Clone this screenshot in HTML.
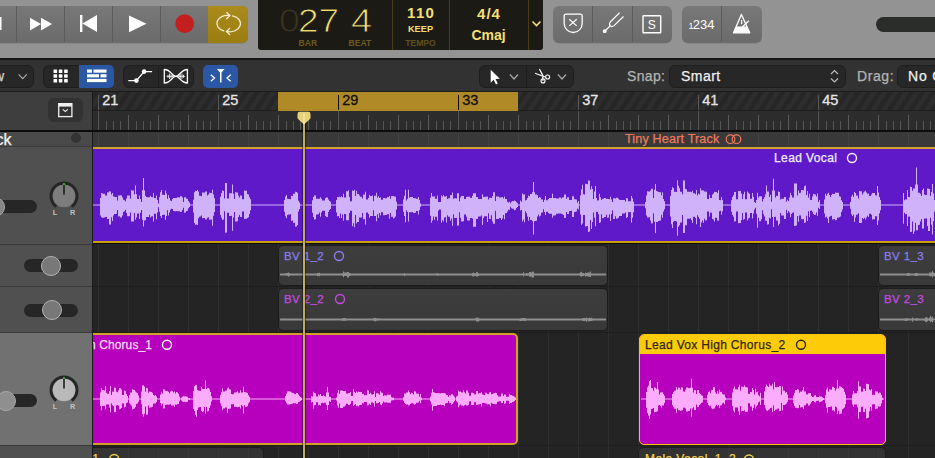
<!DOCTYPE html><html><head><meta charset="utf-8"><style>
*{box-sizing:border-box}
body{margin:0;width:935px;height:458px;overflow:hidden;position:relative;background:#242424;font-family:"Liberation Sans",sans-serif}
.a{position:absolute}
div.a{-webkit-text-stroke:0.25px currentColor;white-space:nowrap}
</style></head><body>

<div class="a" style="left:0;top:0;width:935px;height:58px;background:#939393"></div>
<div class="a" style="left:0;top:58px;width:935px;height:2px;background:#161616"></div>
<div class="a" style="left:-40px;top:6px;width:288px;height:36.5px;background:linear-gradient(#787878,#6b6b6b);border-radius:6px;box-shadow:0 0.5px 0.5px rgba(0,0,0,0.15)"></div>
<div class="a" style="left:16px;top:6px;width:1px;height:36px;background:#5c5c5c"></div>
<div class="a" style="left:64px;top:6px;width:1px;height:36px;background:#5c5c5c"></div>
<div class="a" style="left:112px;top:6px;width:1px;height:36px;background:#5c5c5c"></div>
<div class="a" style="left:160px;top:6px;width:1px;height:36px;background:#5c5c5c"></div>
<div class="a" style="left:208px;top:6px;width:40px;height:36.5px;background:linear-gradient(#a98a1b,#9b7d12);border-radius:0 6px 6px 0"></div>
<svg class="a" style="left:0;top:0" width="260" height="58">
<rect x="-3" y="17" width="4.5" height="13" fill="#fff"/>
<path d="M30 17.7 L41 24 L30 30.4Z M41 17.7 L52 24 L41 30.4Z" fill="#fff"/>
<rect x="80" y="15" width="2.4" height="17" fill="#fff"/>
<path d="M97 15 L82.4 23.5 L97 32Z" fill="#fff"/>
<path d="M129 15.4 L146.5 23.8 L129 32.3Z" fill="#fff"/>
<circle cx="184.7" cy="23.6" r="9.4" fill="#c41f1f"/>
<g fill="none" stroke="#f3ecd0" stroke-width="1.3" stroke-linecap="round">
<path d="M229.2 15.5 A10.5 8 0 0 0 223.8 30.9"/>
<path d="M232.6 15.9 A10.5 8 0 0 1 227 31.5"/>
<path d="M226.6 12.6 L229.9 15.6 L226.6 18.8"/>
<path d="M229.7 28.4 L226.4 31.5 L229.7 34.6"/>
</g>
</svg>
<div class="a" style="left:258px;top:-6px;width:284.6px;height:56px;background:#1c1a14;border-radius:3px"></div>
<div class="a" style="left:392px;top:0;width:1px;height:50px;background:#4a3d16"></div>
<div class="a" style="left:449px;top:0;width:1px;height:50px;background:#4a3d16"></div>
<div class="a" style="left:528px;top:0;width:1px;height:50px;background:#4a3d16"></div>
<div class="a" style="left:278.5px;top:2.5px;font-size:33px;color:#3a3422;line-height:36px;-webkit-text-stroke:0.9px #1c1a14;transform:scaleX(1.14);transform-origin:0 0">0</div>
<div class="a" style="left:298px;top:2.5px;font-size:33px;color:#f4df73;line-height:36px;-webkit-text-stroke:0.9px #1c1a14;transform:scaleX(1.12);transform-origin:0 0">27</div>
<div class="a" style="left:351px;top:2.5px;font-size:33px;color:#f4df73;line-height:36px;-webkit-text-stroke:0.9px #1c1a14;transform:scaleX(1.15);transform-origin:0 0">4</div>
<div class="a" style="left:298.5px;top:36.5px;font-size:8.6px;font-weight:bold;color:#6a5a1f;line-height:12px;-webkit-text-stroke:0">BAR</div>
<div class="a" style="left:348.5px;top:36.5px;font-size:8.6px;font-weight:bold;color:#6a5a1f;line-height:12px;-webkit-text-stroke:0">BEAT</div>
<div class="a" style="left:392px;top:4.5px;width:57px;text-align:center;font-size:15px;font-weight:bold;color:#f4df73;line-height:16px;letter-spacing:1.3px;text-indent:1.3px;-webkit-text-stroke:0">110</div>
<div class="a" style="left:392px;top:23px;width:57px;text-align:center;font-size:9.2px;font-weight:bold;color:#f4df73;line-height:12px;-webkit-text-stroke:0">KEEP</div>
<div class="a" style="left:392px;top:36.5px;width:57px;text-align:center;font-size:8.6px;font-weight:bold;color:#5f501b;line-height:12px;-webkit-text-stroke:0">TEMPO</div>
<div class="a" style="left:449px;top:5px;width:79px;text-align:center;font-size:15px;font-weight:bold;color:#f4df73;line-height:17px;letter-spacing:1px;text-indent:1px;-webkit-text-stroke:0">4/4</div>
<div class="a" style="left:449px;top:26.5px;width:79px;text-align:center;font-size:14px;font-weight:bold;color:#f4df73;line-height:17px;-webkit-text-stroke:0">Cmaj</div>
<svg class="a" style="left:528.5px;top:0" width="14" height="50"><path d="M3.5 21.5 L7.5 25.5 L11.5 21.5" fill="none" stroke="#f4df73" stroke-width="1.6"/></svg>
<div class="a" style="left:553px;top:6px;width:119px;height:36.5px;background:linear-gradient(#787878,#6b6b6b);border-radius:6px;box-shadow:0 0.5px 0.5px rgba(0,0,0,0.15)"></div>
<div class="a" style="left:592px;top:6px;width:1px;height:36px;background:#5c5c5c"></div>
<div class="a" style="left:632px;top:6px;width:1px;height:36px;background:#5c5c5c"></div>
<div class="a" style="left:682px;top:6px;width:80px;height:36.5px;background:linear-gradient(#787878,#6b6b6b);border-radius:6px;box-shadow:0 0.5px 0.5px rgba(0,0,0,0.15)"></div>
<div class="a" style="left:721px;top:6px;width:1px;height:36px;background:#5c5c5c"></div>
<svg class="a" style="left:540px;top:0" width="240" height="58">
<path d="M26.2 14.2 H40.2 Q42.2 14.2 42.2 16.2 V23.5 A9 9 0 0 1 24.2 23.5 V16.2 Q24.2 14.2 26.2 14.2Z" fill="none" stroke="#fff" stroke-width="1.3"/>
<path d="M29.3 19.3 L36.7 25.9 M36.7 19.3 L29.3 25.9" stroke="#fff" stroke-width="1.2"/>
<circle cx="64.7" cy="31.2" r="1.9" fill="#fff"/>
<path d="M64.7 31.2 L69.8 26.2" stroke="#fff" stroke-width="1.2"/>
<path d="M79.6 12.6 L70.3 22 Q68.7 24 70.2 25.8 Q72 27.4 74 25.6 L83.5 16.5" fill="none" stroke="#fff" stroke-width="1.2"/>
<rect x="103" y="15.7" width="17.7" height="17" rx="0.5" fill="none" stroke="#fff" stroke-width="1.4"/>
<text x="111.8" y="29" text-anchor="middle" font-family="Liberation Sans" font-size="12" fill="#fff">S</text>
<text x="148.5" y="28.5" font-family="Liberation Sans" font-size="9" fill="#fff">1</text>
<text x="152.8" y="28.5" font-family="Liberation Sans" font-size="13" fill="#fff">234</text>
<path d="M201.4 14.4 L193.5 32.8 H209.7 Z" fill="none" stroke="#fff" stroke-width="1.3" stroke-linejoin="round"/>
<path d="M196.25 26.4 H206.8 L209.7 32.8 H193.5Z" fill="#fff"/>
<path d="M201.6 27.7 L208.9 20.8 M201.6 20 V24.3" stroke="#fff" stroke-width="1.2"/>
</svg>
<div class="a" style="left:876px;top:17px;width:80px;height:15px;background:#2a2d2a;border-radius:8px"></div>
<div class="a" style="left:0;top:60px;width:935px;height:31px;background:#323232"></div>
<div class="a" style="left:-40px;top:65px;width:74px;height:22.5px;background:#272727;border:1px solid #1e1e1e;border-radius:6px"></div>
<div class="a" style="left:-6px;top:66px;font-size:14px;color:#d0d0d0;line-height:20px">w</div>
<svg class="a" style="left:0;top:59px" width="260" height="32"><path d="M18.6 15.3 L22.7 19.6 L26.8 15.3" fill="none" stroke="#a8a8a8" stroke-width="1.2"/></svg>
<div class="a" style="left:43px;top:64.5px;width:71px;height:23px;background:#272727;border:1px solid #1e1e1e;border-radius:6px"></div>
<div class="a" style="left:79px;top:64.5px;width:35px;height:23px;background:#2a58a4;border-radius:0 5px 5px 0"></div>
<div class="a" style="left:123px;top:64.5px;width:71px;height:23px;background:#272727;border:1px solid #1e1e1e;border-radius:6px"></div>
<div class="a" style="left:158px;top:65px;width:1px;height:22px;background:#1e1e1e"></div>
<div class="a" style="left:203px;top:64.5px;width:35px;height:23px;background:#2a58a4;border-radius:5px"></div>
<svg class="a" style="left:0;top:59px" width="260" height="32"><rect x="53.5" y="10.5" width="3.6" height="3.6" rx="0.6" fill="#fff"/><rect x="53.5" y="15.2" width="3.6" height="3.6" rx="0.6" fill="#fff"/><rect x="53.5" y="19.9" width="3.6" height="3.6" rx="0.6" fill="#fff"/><rect x="58.8" y="10.5" width="3.6" height="3.6" rx="0.6" fill="#fff"/><rect x="58.8" y="15.2" width="3.6" height="3.6" rx="0.6" fill="#fff"/><rect x="58.8" y="19.9" width="3.6" height="3.6" rx="0.6" fill="#fff"/><rect x="64.1" y="10.5" width="3.6" height="3.6" rx="0.6" fill="#fff"/><rect x="64.1" y="15.2" width="3.6" height="3.6" rx="0.6" fill="#fff"/><rect x="64.1" y="19.9" width="3.6" height="3.6" rx="0.6" fill="#fff"/>
<rect x="87" y="10.5" width="5" height="3.2" fill="#fff"/><rect x="93.5" y="10.5" width="13" height="3.2" fill="#fff"/>
<rect x="87" y="15.2" width="12" height="3.2" fill="#fff"/><rect x="100.5" y="15.2" width="6" height="3.2" fill="#fff"/>
<rect x="87" y="19.9" width="19.5" height="3.2" fill="#fff"/>
<path d="M128.3 21.6 H136.4 L144.1 12.6 H152.1" fill="none" stroke="#fff" stroke-width="1.3"/>
<circle cx="136.4" cy="21.6" r="2.3" fill="#fff"/><circle cx="144.1" cy="12.6" r="2.3" fill="#fff"/>
<path d="M164.3 10.5 C171 10.5 172 17.3 175.8 17.3 C179.6 17.3 181 24 187.4 24 M164.3 24 C171 24 172 17.3 175.8 17.3 C179.6 17.3 181 10.5 187.4 10.5 M164.3 10 V24.5 M187.4 10 V24.5" fill="none" stroke="#fff" stroke-width="1.3"/>
<path d="M166.5 17.3 H185 M168 15.8 V18.8 M169.5 14.5 V20 M171 15.3 V19.3 M172.3 16 V18.6 M179.3 16 V18.6 M180.6 15.3 V19.3 M182 14.5 V20 M183.5 15.8 V18.8" stroke="#fff" stroke-width="0.8"/>
<path d="M216.9 10 H224.6 L221.7 13.3 H219.8 Z" fill="#fff"/>
<path d="M220.75 12.5 V23.5" stroke="#fff" stroke-width="1.5"/>
<path d="M210.8 15.8 L214.5 19 L210.8 22.2 M230.7 15.8 L227 19 L230.7 22.2" fill="none" stroke="#fff" stroke-width="1.3"/>
</svg>
<div class="a" style="left:479px;top:64.5px;width:95px;height:23px;background:#272727;border:1px solid #1e1e1e;border-radius:6px"></div>
<div class="a" style="left:526px;top:65px;width:1px;height:22px;background:#1e1e1e"></div>
<svg class="a" style="left:470px;top:59px" width="110" height="32">
<path d="M20.7 10.8 V23.7 L23.6 20.8 L26 25.5 L27.8 24.6 L25.5 20 L29.8 19.8 Z" fill="#fff"/>
<path d="M40 15.5 L44 20 L48 15.5" fill="none" stroke="#aaa" stroke-width="1.2"/>
<path d="M65.1 14.3 L75.2 18 M69.4 10 L72.7 16.1 M72.7 16.1 L73 21.9" fill="none" stroke="#fff" stroke-width="1.2"/>
<circle cx="77.6" cy="18" r="2" fill="none" stroke="#fff" stroke-width="1.1"/><circle cx="73" cy="21.9" r="2" fill="none" stroke="#fff" stroke-width="1.1"/>
<path d="M88 15.5 L92 20 L96 15.5" fill="none" stroke="#aaa" stroke-width="1.2"/>
</svg>
<div class="a" style="left:627px;top:66px;font-size:14px;color:#b4b4b4;line-height:20px;letter-spacing:0.35px">Snap:</div>
<div class="a" style="left:669px;top:64.5px;width:177px;height:23px;background:#272727;border:1px solid #1e1e1e;border-radius:6px"></div>
<div class="a" style="left:681px;top:66px;font-size:14px;color:#f0f0f0;line-height:20px;letter-spacing:0.45px">Smart</div>
<svg class="a" style="left:820px;top:59px" width="26" height="32"><path d="M11 15 L14.5 11.5 L18 15 M11 19.5 L14.5 23 L18 19.5" fill="none" stroke="#bbb" stroke-width="1.2"/></svg>
<div class="a" style="left:857px;top:66px;font-size:14px;color:#b4b4b4;line-height:20px;letter-spacing:0.6px">Drag:</div>
<div class="a" style="left:897px;top:64.5px;width:80px;height:23px;background:#272727;border:1px solid #1e1e1e;border-radius:6px"></div>
<div class="a" style="left:908px;top:66px;font-size:14px;color:#f0f0f0;line-height:20px;letter-spacing:0.8px">No C</div>
<div class="a" style="left:0;top:91px;width:935px;height:1px;background:#1b1b1b"></div>
<div class="a" style="left:0;top:92px;width:92px;height:39px;background:#3e3e3e"></div>
<div class="a" style="left:47.5px;top:98px;width:35.5px;height:24px;background:#323232;border-radius:6px"></div>
<svg class="a" style="left:47px;top:98px" width="36" height="24"><rect x="11.7" y="5.7" width="13.2" height="12.9" fill="none" stroke="#f0f0f0" stroke-width="1.3"/><rect x="11.7" y="5.2" width="13.2" height="3.4" fill="#f0f0f0"/><path d="M15.8 11.3 L18.3 13.5 L20.8 11.3" fill="none" stroke="#e8e8e8" stroke-width="1.1"/></svg>
<div class="a" style="left:92px;top:92px;width:1px;height:366px;background:#1a1a1a"></div>
<div class="a" style="left:93px;top:92px;width:842px;height:18px;background:repeating-linear-gradient(-57deg,#262626 0 4.5px,#2d2d2d 4.5px 9px)"></div>
<div class="a" style="left:93px;top:110px;width:842px;height:1px;background:#1f1f1f"></div>
<div class="a" style="left:93px;top:111px;width:842px;height:19px;background:#2c2c2c"></div>
<div class="a" style="left:0;top:130px;width:935px;height:2px;background:#0c0c0c"></div>
<div class="a" style="left:278px;top:92px;width:240px;height:19px;background:#b08a27"></div>
<svg class="a" style="left:0;top:0" width="935" height="135"><rect x="98" y="95" width="1" height="15" fill="#5a5a5a"/><rect x="98" y="111" width="1" height="19" fill="#555"/><text x="102.3" y="105.3" font-family="Liberation Sans" font-size="14.5" fill="#e6e6e6" stroke="#e6e6e6" stroke-width="0.3">21</text><rect x="106" y="121" width="1" height="9" fill="#555"/><rect x="113" y="121" width="1" height="9" fill="#555"/><rect x="120" y="121" width="1" height="9" fill="#555"/><rect x="128" y="115" width="1" height="15" fill="#5a5a5a"/><rect x="136" y="121" width="1" height="9" fill="#555"/><rect x="143" y="121" width="1" height="9" fill="#555"/><rect x="150" y="121" width="1" height="9" fill="#555"/><rect x="158" y="115" width="1" height="15" fill="#5a5a5a"/><rect x="166" y="121" width="1" height="9" fill="#555"/><rect x="173" y="121" width="1" height="9" fill="#555"/><rect x="180" y="121" width="1" height="9" fill="#555"/><rect x="188" y="115" width="1" height="15" fill="#5a5a5a"/><rect x="196" y="121" width="1" height="9" fill="#555"/><rect x="203" y="121" width="1" height="9" fill="#555"/><rect x="210" y="121" width="1" height="9" fill="#555"/><rect x="218" y="95" width="1" height="15" fill="#5a5a5a"/><rect x="218" y="111" width="1" height="19" fill="#555"/><text x="222.3" y="105.3" font-family="Liberation Sans" font-size="14.5" fill="#e6e6e6" stroke="#e6e6e6" stroke-width="0.3">25</text><rect x="226" y="121" width="1" height="9" fill="#555"/><rect x="233" y="121" width="1" height="9" fill="#555"/><rect x="240" y="121" width="1" height="9" fill="#555"/><rect x="248" y="115" width="1" height="15" fill="#5a5a5a"/><rect x="256" y="121" width="1" height="9" fill="#555"/><rect x="263" y="121" width="1" height="9" fill="#555"/><rect x="270" y="121" width="1" height="9" fill="#555"/><rect x="278" y="115" width="1" height="15" fill="#5a5a5a"/><rect x="286" y="121" width="1" height="9" fill="#555"/><rect x="293" y="121" width="1" height="9" fill="#555"/><rect x="300" y="121" width="1" height="9" fill="#555"/><rect x="308" y="115" width="1" height="15" fill="#5a5a5a"/><rect x="316" y="121" width="1" height="9" fill="#555"/><rect x="323" y="121" width="1" height="9" fill="#555"/><rect x="330" y="121" width="1" height="9" fill="#555"/><rect x="338" y="95" width="1" height="15" fill="#111"/><rect x="338" y="111" width="1" height="19" fill="#555"/><text x="342.3" y="105.3" font-family="Liberation Sans" font-size="14.5" fill="#111" stroke="#111" stroke-width="0.3">29</text><rect x="346" y="121" width="1" height="9" fill="#555"/><rect x="353" y="121" width="1" height="9" fill="#555"/><rect x="360" y="121" width="1" height="9" fill="#555"/><rect x="368" y="115" width="1" height="15" fill="#5a5a5a"/><rect x="376" y="121" width="1" height="9" fill="#555"/><rect x="383" y="121" width="1" height="9" fill="#555"/><rect x="390" y="121" width="1" height="9" fill="#555"/><rect x="398" y="115" width="1" height="15" fill="#5a5a5a"/><rect x="406" y="121" width="1" height="9" fill="#555"/><rect x="413" y="121" width="1" height="9" fill="#555"/><rect x="420" y="121" width="1" height="9" fill="#555"/><rect x="428" y="115" width="1" height="15" fill="#5a5a5a"/><rect x="436" y="121" width="1" height="9" fill="#555"/><rect x="443" y="121" width="1" height="9" fill="#555"/><rect x="450" y="121" width="1" height="9" fill="#555"/><rect x="458" y="95" width="1" height="15" fill="#111"/><rect x="458" y="111" width="1" height="19" fill="#555"/><text x="462.3" y="105.3" font-family="Liberation Sans" font-size="14.5" fill="#111" stroke="#111" stroke-width="0.3">33</text><rect x="466" y="121" width="1" height="9" fill="#555"/><rect x="473" y="121" width="1" height="9" fill="#555"/><rect x="480" y="121" width="1" height="9" fill="#555"/><rect x="488" y="115" width="1" height="15" fill="#5a5a5a"/><rect x="496" y="121" width="1" height="9" fill="#555"/><rect x="503" y="121" width="1" height="9" fill="#555"/><rect x="510" y="121" width="1" height="9" fill="#555"/><rect x="518" y="115" width="1" height="15" fill="#5a5a5a"/><rect x="526" y="121" width="1" height="9" fill="#555"/><rect x="533" y="121" width="1" height="9" fill="#555"/><rect x="540" y="121" width="1" height="9" fill="#555"/><rect x="548" y="115" width="1" height="15" fill="#5a5a5a"/><rect x="556" y="121" width="1" height="9" fill="#555"/><rect x="563" y="121" width="1" height="9" fill="#555"/><rect x="570" y="121" width="1" height="9" fill="#555"/><rect x="578" y="95" width="1" height="15" fill="#5a5a5a"/><rect x="578" y="111" width="1" height="19" fill="#555"/><text x="582.3" y="105.3" font-family="Liberation Sans" font-size="14.5" fill="#e6e6e6" stroke="#e6e6e6" stroke-width="0.3">37</text><rect x="586" y="121" width="1" height="9" fill="#555"/><rect x="593" y="121" width="1" height="9" fill="#555"/><rect x="600" y="121" width="1" height="9" fill="#555"/><rect x="608" y="115" width="1" height="15" fill="#5a5a5a"/><rect x="616" y="121" width="1" height="9" fill="#555"/><rect x="623" y="121" width="1" height="9" fill="#555"/><rect x="630" y="121" width="1" height="9" fill="#555"/><rect x="638" y="115" width="1" height="15" fill="#5a5a5a"/><rect x="646" y="121" width="1" height="9" fill="#555"/><rect x="653" y="121" width="1" height="9" fill="#555"/><rect x="660" y="121" width="1" height="9" fill="#555"/><rect x="668" y="115" width="1" height="15" fill="#5a5a5a"/><rect x="676" y="121" width="1" height="9" fill="#555"/><rect x="683" y="121" width="1" height="9" fill="#555"/><rect x="690" y="121" width="1" height="9" fill="#555"/><rect x="698" y="95" width="1" height="15" fill="#5a5a5a"/><rect x="698" y="111" width="1" height="19" fill="#555"/><text x="702.3" y="105.3" font-family="Liberation Sans" font-size="14.5" fill="#e6e6e6" stroke="#e6e6e6" stroke-width="0.3">41</text><rect x="706" y="121" width="1" height="9" fill="#555"/><rect x="713" y="121" width="1" height="9" fill="#555"/><rect x="720" y="121" width="1" height="9" fill="#555"/><rect x="728" y="115" width="1" height="15" fill="#5a5a5a"/><rect x="736" y="121" width="1" height="9" fill="#555"/><rect x="743" y="121" width="1" height="9" fill="#555"/><rect x="750" y="121" width="1" height="9" fill="#555"/><rect x="758" y="115" width="1" height="15" fill="#5a5a5a"/><rect x="766" y="121" width="1" height="9" fill="#555"/><rect x="773" y="121" width="1" height="9" fill="#555"/><rect x="780" y="121" width="1" height="9" fill="#555"/><rect x="788" y="115" width="1" height="15" fill="#5a5a5a"/><rect x="796" y="121" width="1" height="9" fill="#555"/><rect x="803" y="121" width="1" height="9" fill="#555"/><rect x="810" y="121" width="1" height="9" fill="#555"/><rect x="818" y="95" width="1" height="15" fill="#5a5a5a"/><rect x="818" y="111" width="1" height="19" fill="#555"/><text x="822.3" y="105.3" font-family="Liberation Sans" font-size="14.5" fill="#e6e6e6" stroke="#e6e6e6" stroke-width="0.3">45</text><rect x="826" y="121" width="1" height="9" fill="#555"/><rect x="833" y="121" width="1" height="9" fill="#555"/><rect x="840" y="121" width="1" height="9" fill="#555"/><rect x="848" y="115" width="1" height="15" fill="#5a5a5a"/><rect x="856" y="121" width="1" height="9" fill="#555"/><rect x="863" y="121" width="1" height="9" fill="#555"/><rect x="870" y="121" width="1" height="9" fill="#555"/><rect x="878" y="115" width="1" height="15" fill="#5a5a5a"/><rect x="886" y="121" width="1" height="9" fill="#555"/><rect x="893" y="121" width="1" height="9" fill="#555"/><rect x="900" y="121" width="1" height="9" fill="#555"/><rect x="908" y="115" width="1" height="15" fill="#5a5a5a"/><rect x="916" y="121" width="1" height="9" fill="#555"/><rect x="923" y="121" width="1" height="9" fill="#555"/><rect x="930" y="121" width="1" height="9" fill="#555"/></svg>
<div class="a" style="left:0;top:132px;width:92px;height:14px;background:#4a4a4a"></div>
<div class="a" style="left:0;top:146px;width:92px;height:1px;background:#3a3a3a"></div>
<div class="a" style="left:-4.5px;top:131px;font-size:16px;color:#f4f4f4;line-height:18px">ck</div>
<div class="a" style="left:71px;top:133px;width:10px;height:10px;border-radius:50%;background:#333"></div>
<div class="a" style="left:93px;top:132px;width:842px;height:15px;background:#393939"></div>
<svg class="a" style="left:0;top:0" width="935" height="150"><rect x="98" y="132" width="1" height="15" fill="#424242"/><rect x="128" y="132" width="1" height="15" fill="#424242"/><rect x="158" y="132" width="1" height="15" fill="#424242"/><rect x="188" y="132" width="1" height="15" fill="#424242"/><rect x="218" y="132" width="1" height="15" fill="#424242"/><rect x="248" y="132" width="1" height="15" fill="#424242"/><rect x="278" y="132" width="1" height="15" fill="#424242"/><rect x="308" y="132" width="1" height="15" fill="#424242"/><rect x="338" y="132" width="1" height="15" fill="#424242"/><rect x="368" y="132" width="1" height="15" fill="#424242"/><rect x="398" y="132" width="1" height="15" fill="#424242"/><rect x="428" y="132" width="1" height="15" fill="#424242"/><rect x="458" y="132" width="1" height="15" fill="#424242"/><rect x="488" y="132" width="1" height="15" fill="#424242"/><rect x="518" y="132" width="1" height="15" fill="#424242"/><rect x="548" y="132" width="1" height="15" fill="#424242"/><rect x="578" y="132" width="1" height="15" fill="#424242"/><rect x="608" y="132" width="1" height="15" fill="#424242"/><rect x="638" y="132" width="1" height="15" fill="#424242"/><rect x="668" y="132" width="1" height="15" fill="#424242"/><rect x="698" y="132" width="1" height="15" fill="#424242"/><rect x="728" y="132" width="1" height="15" fill="#424242"/><rect x="758" y="132" width="1" height="15" fill="#424242"/><rect x="788" y="132" width="1" height="15" fill="#424242"/><rect x="818" y="132" width="1" height="15" fill="#424242"/><rect x="848" y="132" width="1" height="15" fill="#424242"/><rect x="878" y="132" width="1" height="15" fill="#424242"/><rect x="908" y="132" width="1" height="15" fill="#424242"/></svg>
<div class="a" style="left:625px;top:131px;font-size:12.5px;color:#ee7a5c;line-height:16px;letter-spacing:0.2px">Tiny Heart Track</div>
<svg class="a" style="left:720px;top:131px" width="30" height="16"><circle cx="10.5" cy="8.2" r="4.3" fill="none" stroke="#ee7a5c" stroke-width="1.2"/><circle cx="16.5" cy="8.2" r="4.3" fill="none" stroke="#ee7a5c" stroke-width="1.2"/></svg>
<div class="a" style="left:0;top:147px;width:92px;height:97px;background:#505050"></div>
<div class="a" style="left:0;top:244px;width:92px;height:1px;background:#3a3a3a"></div>
<div class="a" style="left:0;top:245px;width:92px;height:41px;background:#505050"></div>
<div class="a" style="left:0;top:286px;width:92px;height:1px;background:#3a3a3a"></div>
<div class="a" style="left:0;top:287px;width:92px;height:45px;background:#505050"></div>
<div class="a" style="left:0;top:332px;width:92px;height:1px;background:#3a3a3a"></div>
<div class="a" style="left:0;top:333px;width:92px;height:112px;background:#717171"></div>
<div class="a" style="left:0;top:445px;width:92px;height:1px;background:#3a3a3a"></div>
<div class="a" style="left:0;top:446px;width:92px;height:12px;background:#505050"></div>
<div class="a" style="left:-20px;top:200px;width:57px;height:13px;background:#262626;border-radius:6.5px"></div><div class="a" style="left:-15.0px;top:196.5px;width:20px;height:20px;border-radius:50%;background:#858585;border:1px solid #a9a9a9"></div>
<svg class="a" style="left:44px;top:176px" width="40" height="44">
<path d="M12.36 30.52 A13 13 0 1 1 27.64 30.52" fill="none" stroke="#262626" stroke-width="3"/>
<circle cx="20" cy="20" r="11.3" fill="#7d7d7d"/>
<path d="M20 8.5 V18.5" stroke="#262626" stroke-width="1.7"/>
<circle cx="20" cy="8" r="1.1" fill="#3fbf3f"/>
<text x="8.7" y="39.2" font-family="Liberation Sans" font-size="7.2" font-weight="bold" fill="#c4c4c4">L</text>
<text x="25.9" y="39.2" font-family="Liberation Sans" font-size="7.2" font-weight="bold" fill="#c4c4c4">R</text>
</svg>
<div class="a" style="left:24px;top:259px;width:54px;height:13px;background:#262626;border-radius:6.5px"></div>
<div class="a" style="left:41px;top:255.5px;width:20px;height:20px;border-radius:50%;background:#787878;border:1px solid #b3b3b3"></div>
<div class="a" style="left:24px;top:304px;width:54px;height:13px;background:#262626;border-radius:6.5px"></div>
<div class="a" style="left:42px;top:300px;width:20px;height:20px;border-radius:50%;background:#787878;border:1px solid #b3b3b3"></div>
<div class="a" style="left:-20px;top:394px;width:57px;height:13px;background:#262626;border-radius:6.5px"></div><div class="a" style="left:-4.0px;top:390.5px;width:20px;height:20px;border-radius:50%;background:#8f8f8f;border:1px solid #a9a9a9"></div>
<svg class="a" style="left:44px;top:370px" width="40" height="44">
<path d="M12.36 30.52 A13 13 0 1 1 27.64 30.52" fill="none" stroke="#262626" stroke-width="3"/>
<circle cx="20" cy="20" r="11.3" fill="#b9b9b9"/>
<path d="M20 8.5 V18.5" stroke="#262626" stroke-width="1.7"/>
<circle cx="20" cy="8" r="1.1" fill="#3fbf3f"/>
<text x="8.7" y="39.2" font-family="Liberation Sans" font-size="7.2" font-weight="bold" fill="#c4c4c4">L</text>
<text x="25.9" y="39.2" font-family="Liberation Sans" font-size="7.2" font-weight="bold" fill="#c4c4c4">R</text>
</svg>
<svg class="a" style="left:0;top:0" width="935" height="458"><rect x="98" y="244" width="1" height="214" fill="#303030"/><rect x="128" y="244" width="1" height="214" fill="#303030"/><rect x="158" y="244" width="1" height="214" fill="#303030"/><rect x="188" y="244" width="1" height="214" fill="#303030"/><rect x="218" y="244" width="1" height="214" fill="#303030"/><rect x="248" y="244" width="1" height="214" fill="#303030"/><rect x="278" y="244" width="1" height="214" fill="#303030"/><rect x="308" y="244" width="1" height="214" fill="#303030"/><rect x="338" y="244" width="1" height="214" fill="#303030"/><rect x="368" y="244" width="1" height="214" fill="#303030"/><rect x="398" y="244" width="1" height="214" fill="#303030"/><rect x="428" y="244" width="1" height="214" fill="#303030"/><rect x="458" y="244" width="1" height="214" fill="#303030"/><rect x="488" y="244" width="1" height="214" fill="#303030"/><rect x="518" y="244" width="1" height="214" fill="#303030"/><rect x="548" y="244" width="1" height="214" fill="#303030"/><rect x="578" y="244" width="1" height="214" fill="#303030"/><rect x="608" y="244" width="1" height="214" fill="#303030"/><rect x="638" y="244" width="1" height="214" fill="#303030"/><rect x="668" y="244" width="1" height="214" fill="#303030"/><rect x="698" y="244" width="1" height="214" fill="#303030"/><rect x="728" y="244" width="1" height="214" fill="#303030"/><rect x="758" y="244" width="1" height="214" fill="#303030"/><rect x="788" y="244" width="1" height="214" fill="#303030"/><rect x="818" y="244" width="1" height="214" fill="#303030"/><rect x="848" y="244" width="1" height="214" fill="#303030"/><rect x="878" y="244" width="1" height="214" fill="#303030"/><rect x="908" y="244" width="1" height="214" fill="#303030"/></svg>
<div class="a" style="left:93px;top:243px;width:842px;height:1px;background:#0c0c0c"></div>
<div class="a" style="left:93px;top:286px;width:842px;height:1px;background:#1e1e1e"></div>
<div class="a" style="left:93px;top:332px;width:842px;height:1px;background:#1e1e1e"></div>
<div class="a" style="left:93px;top:445px;width:842px;height:1px;background:#1e1e1e"></div>
<div class="a" style="left:93px;top:147px;width:842px;height:96px;background:#6019c9;border-top:2px solid #d3a126;border-bottom:2px solid #c9a00e"></div>
<div class="a" style="left:774px;top:150px;font-size:12px;color:#f4f0ff;line-height:16px;letter-spacing:0.4px">Lead Vocal</div>
<svg class="a" style="left:840px;top:148px" width="24" height="20"><circle cx="12" cy="10" r="4.5" fill="none" stroke="#f4f0ff" stroke-width="1.4"/></svg>
<svg class="a" style="left:0;top:0" width="935" height="458"><path d="M93 204.4 94 204.4 94 204.4 95 204.4 95 204.4 96 204.4 96 204.4 97 204.4 97 204.4 98 204.4 98 204.4 99 204.4 99 204.4 100 204.4 100 198.0 101 198.0 101 193.1 102 193.1 102 193.6 103 193.6 103 193.7 104 193.7 104 193.8 105 193.8 105 195.5 106 195.5 106 195.6 107 195.6 107 192.3 108 192.3 108 192.4 109 192.4 109 191.3 110 191.3 110 191.4 111 191.4 111 194.6 112 194.6 112 193.0 113 193.0 113 196.5 114 196.5 114 196.8 115 196.8 115 196.9 116 196.9 116 197.0 117 197.0 117 200.6 118 200.6 118 195.4 119 195.4 119 195.5 120 195.5 120 195.3 121 195.3 121 195.4 122 195.4 122 197.5 123 197.5 123 199.8 124 199.8 124 200.2 125 200.2 125 201.2 126 201.2 126 198.6 127 198.6 127 195.5 128 195.5 128 195.6 129 195.6 129 195.6 130 195.6 130 198.7 131 198.7 131 190.3 132 190.3 132 190.4 133 190.4 133 190.5 134 190.5 134 194.2 135 194.2 135 185.4 136 185.4 136 194.2 137 194.2 137 198.9 138 198.9 138 198.9 139 198.9 139 195.4 140 195.4 140 199.0 141 199.0 141 201.9 142 201.9 142 190.2 143 190.2 143 178.1 144 178.1 144 190.2 145 190.2 145 195.8 146 195.8 146 197.1 147 197.1 147 197.2 148 197.2 148 197.2 149 197.2 149 197.3 150 197.3 150 195.7 151 195.7 151 197.1 152 197.1 152 197.2 153 197.2 153 192.9 154 192.9 154 198.1 155 198.1 155 198.2 156 198.2 156 195.5 157 195.5 157 199.9 158 199.9 158 203.6 159 203.6 159 197.2 160 197.2 160 192.2 161 192.2 161 189.9 162 189.9 162 194.7 163 194.7 163 194.8 164 194.8 164 195.0 165 195.0 165 190.4 166 190.4 166 193.5 167 193.5 167 198.8 168 198.8 168 195.2 169 195.2 169 197.9 170 197.9 170 200.5 171 200.5 171 201.0 172 201.0 172 198.9 173 198.9 173 198.0 174 198.0 174 197.9 175 197.9 175 198.0 176 198.0 176 198.1 177 198.1 177 197.3 178 197.3 178 197.3 179 197.3 179 197.4 180 197.4 180 196.2 181 196.2 181 196.3 182 196.3 182 197.6 183 197.6 183 202.1 184 202.1 184 197.2 185 197.2 185 197.3 186 197.3 186 198.5 187 198.5 187 198.9 188 198.9 188 201.1 189 201.1 189 202.5 190 202.5 190 204.4 191 204.4 191 204.4 192 204.4 192 204.4 193 204.4 193 199.8 194 199.8 194 192.3 195 192.3 195 190.8 196 190.8 196 190.9 197 190.9 197 189.9 198 189.9 198 191.4 199 191.4 199 195.7 200 195.7 200 195.8 201 195.8 201 196.3 202 196.3 202 192.5 203 192.5 203 192.6 204 192.6 204 192.7 205 192.7 205 191.5 206 191.5 206 191.6 207 191.6 207 195.6 208 195.6 208 194.4 209 194.4 209 192.8 210 192.8 210 192.9 211 192.9 211 193.1 212 193.1 212 189.7 213 189.7 213 194.5 214 194.5 214 198.3 215 198.3 215 204.4 216 204.4 216 204.4 217 204.4 217 204.4 218 204.4 218 204.4 219 204.4 219 204.4 220 204.4 220 196.7 221 196.7 221 192.9 222 192.9 222 190.5 223 190.5 223 191.1 224 191.1 224 198.5 225 198.5 225 183.0 226 183.0 226 183.1 227 183.1 227 198.4 228 198.4 228 198.4 229 198.4 229 193.2 230 193.2 230 193.2 231 193.2 231 193.3 232 193.3 232 184.5 233 184.5 233 193.8 234 193.8 234 199.1 235 199.1 235 192.3 236 192.3 236 192.4 237 192.4 237 192.5 238 192.5 238 195.4 239 195.4 239 197.5 240 197.5 240 195.5 241 195.5 241 195.5 242 195.5 242 199.2 243 199.2 243 199.3 244 199.3 244 190.6 245 190.6 245 190.7 246 190.7 246 190.8 247 190.8 247 193.9 248 193.9 248 194.5 249 194.5 249 197.3 250 197.3 250 199.2 251 199.2 251 204.4 252 204.4 252 204.4 253 204.4 253 204.4 254 204.4 254 204.4 255 204.4 255 204.4 256 204.4 256 204.4 257 204.4 257 204.4 258 204.4 258 204.4 259 204.4 259 204.4 260 204.4 260 204.4 261 204.4 261 204.4 262 204.4 262 204.4 263 204.4 263 204.4 264 204.4 264 204.4 265 204.4 265 204.4 266 204.4 266 204.4 267 204.4 267 204.4 268 204.4 268 204.4 269 204.4 269 204.4 270 204.4 270 204.4 271 204.4 271 204.4 272 204.4 272 204.4 273 204.4 273 204.4 274 204.4 274 204.4 275 204.4 275 204.4 276 204.4 276 204.4 277 204.4 277 204.4 278 204.4 278 204.4 279 204.4 279 204.4 280 204.4 280 204.4 281 204.4 281 204.4 282 204.4 282 204.4 283 204.4 283 204.4 284 204.4 284 199.9 285 199.9 285 196.5 286 196.5 286 194.9 287 194.9 287 198.8 288 198.8 288 199.1 289 199.1 289 199.1 290 199.1 290 199.2 291 199.2 291 195.8 292 195.8 292 196.0 293 196.0 293 193.7 294 193.7 294 193.8 295 193.8 295 191.8 296 191.8 296 192.0 297 192.0 297 192.8 298 192.8 298 200.7 299 200.7 299 202.6 300 202.6 300 204.4 301 204.4 301 204.4 302 204.4 302 204.4 303 204.4 303 204.4 304 204.4 304 204.4 305 204.4 305 204.4 306 204.4 306 204.4 307 204.4 307 204.4 308 204.4 308 204.4 309 204.4 309 204.4 310 204.4 310 204.4 311 204.4 311 204.4 312 204.4 312 200.3 313 200.3 313 197.0 314 197.0 314 195.5 315 195.5 315 195.6 316 195.6 316 198.7 317 198.7 317 198.8 318 198.8 318 198.8 319 198.8 319 198.8 320 198.8 320 197.3 321 197.3 321 198.8 322 198.8 322 200.5 323 200.5 323 200.6 324 200.6 324 200.6 325 200.6 325 197.9 326 197.9 326 197.5 327 197.5 327 197.6 328 197.6 328 199.6 329 199.6 329 201.1 330 201.1 330 201.7 331 201.7 331 204.4 332 204.4 332 204.4 333 204.4 333 204.4 334 204.4 334 204.4 335 204.4 335 204.4 336 204.4 336 200.1 337 200.1 337 196.9 338 196.9 338 197.3 339 197.3 339 196.4 340 196.4 340 197.2 341 197.2 341 196.2 342 196.2 342 197.2 343 197.2 343 193.8 344 193.8 344 197.4 345 197.4 345 197.4 346 197.4 346 191.3 347 191.3 347 191.3 348 191.3 348 190.3 349 190.3 349 196.9 350 196.9 350 201.2 351 201.2 351 201.2 352 201.2 352 190.5 353 190.5 353 191.0 354 191.0 354 189.8 355 189.8 355 196.1 356 196.1 356 190.7 357 190.7 357 194.1 358 194.1 358 194.1 359 194.1 359 195.4 360 195.4 360 196.7 361 196.7 361 196.7 362 196.7 362 198.5 363 198.5 363 194.4 364 194.4 364 194.4 365 194.4 365 191.7 366 191.7 366 199.5 367 199.5 367 199.6 368 199.6 368 198.1 369 198.1 369 194.7 370 194.7 370 195.9 371 195.9 371 196.0 372 196.0 372 195.5 373 195.5 373 201.2 374 201.2 374 195.8 375 195.8 375 195.8 376 195.8 376 192.7 377 192.7 377 197.6 378 197.6 378 196.3 379 196.3 379 198.0 380 198.0 380 197.3 381 197.3 381 199.7 382 199.7 382 199.7 383 199.7 383 198.0 384 198.0 384 198.0 385 198.0 385 198.2 386 198.2 386 198.2 387 198.2 387 197.1 388 197.1 388 197.1 389 197.1 389 196.0 390 196.0 390 198.7 391 198.7 391 196.1 392 196.1 392 196.1 393 196.1 393 196.1 394 196.1 394 196.6 395 196.6 395 196.8 396 196.8 396 201.7 397 201.7 397 204.4 398 204.4 398 204.4 399 204.4 399 204.4 400 204.4 400 204.4 401 204.4 401 204.4 402 204.4 402 204.4 403 204.4 403 199.4 404 199.4 404 195.8 405 195.8 405 189.8 406 189.8 406 200.5 407 200.5 407 198.7 408 198.7 408 189.8 409 189.8 409 197.8 410 197.8 410 196.9 411 196.9 411 196.9 412 196.9 412 197.0 413 197.0 413 198.1 414 198.1 414 198.2 415 198.2 415 198.3 416 198.3 416 198.7 417 198.7 417 198.7 418 198.7 418 196.9 419 196.9 419 200.1 420 200.1 420 203.4 421 203.4 421 204.4 422 204.4 422 204.4 423 204.4 423 204.4 424 204.4 424 204.4 425 204.4 425 204.4 426 204.4 426 204.4 427 204.4 427 204.4 428 204.4 428 204.4 429 204.4 429 204.4 430 204.4 430 197.7 431 197.7 431 192.9 432 192.9 432 196.6 433 196.6 433 196.6 434 196.6 434 196.2 435 196.2 435 198.7 436 198.7 436 198.7 437 198.7 437 195.4 438 195.4 438 201.9 439 201.9 439 201.9 440 201.9 440 201.9 441 201.9 441 195.6 442 195.6 442 196.5 443 196.5 443 195.1 444 195.1 444 196.5 445 196.5 445 196.4 446 196.4 446 196.1 447 196.1 447 198.9 448 198.9 448 198.3 449 198.3 449 198.3 450 198.3 450 195.3 451 195.3 451 195.1 452 195.1 452 192.4 453 192.4 453 198.7 454 198.7 454 198.3 455 198.3 455 198.3 456 198.3 456 198.4 457 198.4 457 193.2 458 193.2 458 193.3 459 193.3 459 201.2 460 201.2 460 197.4 461 197.4 461 196.0 462 196.0 462 196.0 463 196.0 463 196.1 464 196.1 464 199.0 465 199.0 465 199.0 466 199.0 466 197.0 467 197.0 467 196.8 468 196.8 468 196.8 469 196.8 469 196.8 470 196.8 470 197.8 471 197.8 471 197.9 472 197.9 472 195.8 473 195.8 473 193.2 474 193.2 474 193.2 475 193.2 475 193.2 476 193.2 476 196.9 477 196.9 477 196.9 478 196.9 478 199.0 479 199.0 479 199.0 480 199.0 480 199.0 481 199.0 481 199.0 482 199.0 482 194.3 483 194.3 483 197.0 484 197.0 484 196.8 485 196.8 485 196.8 486 196.8 486 196.8 487 196.8 487 196.5 488 196.5 488 199.5 489 199.5 489 197.8 490 197.8 490 197.8 491 197.8 491 198.0 492 198.0 492 196.2 493 196.2 493 192.2 494 192.2 494 192.2 495 192.2 495 201.1 496 201.1 496 196.5 497 196.5 497 196.6 498 196.6 498 196.6 499 196.6 499 197.4 500 197.4 500 197.5 501 197.5 501 197.3 502 197.3 502 197.0 503 197.0 503 198.6 504 198.6 504 196.6 505 196.6 505 199.1 506 199.1 506 199.1 507 199.1 507 201.7 508 201.7 508 202.6 509 202.6 509 201.8 510 201.8 510 203.3 511 203.3 511 201.7 512 201.7 512 201.1 513 201.1 513 201.2 514 201.2 514 200.6 515 200.6 515 201.0 516 201.0 516 202.2 517 202.2 517 203.2 518 203.2 518 204.4 519 204.4 519 204.4 520 204.4 520 200.4 521 200.4 521 201.7 522 201.7 522 193.4 523 193.4 523 194.5 524 194.5 524 194.2 525 194.2 525 200.5 526 200.5 526 199.8 527 199.8 527 198.0 528 198.0 528 195.6 529 195.6 529 196.2 530 196.2 530 194.0 531 194.0 531 194.1 532 194.1 532 192.3 533 192.3 533 181.9 534 181.9 534 192.3 535 192.3 535 194.4 536 194.4 536 194.5 537 194.5 537 195.2 538 195.2 538 197.9 539 197.9 539 197.0 540 197.0 540 197.4 541 197.4 541 199.5 542 199.5 542 199.4 543 199.4 543 201.9 544 201.9 544 199.8 545 199.8 545 196.0 546 196.0 546 200.2 547 200.2 547 200.2 548 200.2 548 199.0 549 199.0 549 198.0 550 198.0 550 198.1 551 198.1 551 198.1 552 198.1 552 193.8 553 193.8 553 197.9 554 197.9 554 197.9 555 197.9 555 197.9 556 197.9 556 198.4 557 198.4 557 198.5 558 198.5 558 198.5 559 198.5 559 197.5 560 197.5 560 197.5 561 197.5 561 198.4 562 198.4 562 197.6 563 197.6 563 197.2 564 197.2 564 194.5 565 194.5 565 194.6 566 194.6 566 198.8 567 198.8 567 197.3 568 197.3 568 197.3 569 197.3 569 199.9 570 199.9 570 199.9 571 199.9 571 200.0 572 200.0 572 196.2 573 196.2 573 196.3 574 196.3 574 199.2 575 199.2 575 199.2 576 199.2 576 199.6 577 199.6 577 202.8 578 202.8 578 201.0 579 201.0 579 204.4 580 204.4 580 195.5 581 195.5 581 189.5 582 189.5 582 184.7 583 184.7 583 194.3 584 194.3 584 194.4 585 194.4 585 183.7 586 183.7 586 184.0 587 184.0 587 184.2 588 184.2 588 180.4 589 180.4 589 180.7 590 180.7 590 189.4 591 189.4 591 186.3 592 186.3 592 189.0 593 189.0 593 198.9 594 198.9 594 191.5 595 191.5 595 186.0 596 186.0 596 198.1 597 198.1 597 200.6 598 200.6 598 200.2 599 200.2 599 193.7 600 193.7 600 197.2 601 197.2 601 200.0 602 200.0 602 198.7 603 198.7 603 198.7 604 198.7 604 198.0 605 198.0 605 198.0 606 198.0 606 199.1 607 199.1 607 198.8 608 198.8 608 198.9 609 198.9 609 199.2 610 199.2 610 196.8 611 196.8 611 199.4 612 199.4 612 202.1 613 202.1 613 198.3 614 198.3 614 198.3 615 198.3 615 198.5 616 198.5 616 197.7 617 197.7 617 197.7 618 197.7 618 198.7 619 198.7 619 199.8 620 199.8 620 199.9 621 199.9 621 199.9 622 199.9 622 200.1 623 200.1 623 200.1 624 200.1 624 200.1 625 200.1 625 201.4 626 201.4 626 197.9 627 197.9 627 198.6 628 198.6 628 201.2 629 201.2 629 201.2 630 201.2 630 201.2 631 201.2 631 195.9 632 195.9 632 198.3 633 198.3 633 201.7 634 201.7 634 204.4 635 204.4 635 204.4 636 204.4 636 204.4 637 204.4 637 204.4 638 204.4 638 204.4 639 204.4 639 204.4 640 204.4 640 204.4 641 204.4 641 204.4 642 204.4 642 204.4 643 204.4 643 204.4 644 204.4 644 204.4 645 204.4 645 202.1 646 202.1 646 195.4 647 195.4 647 191.3 648 191.3 648 191.4 649 191.4 649 191.5 650 191.5 650 190.5 651 190.5 651 188.7 652 188.7 652 188.8 653 188.8 653 198.1 654 198.1 654 189.8 655 189.8 655 183.9 656 183.9 656 191.1 657 191.1 657 191.3 658 191.3 658 191.9 659 191.9 659 192.1 660 192.1 660 192.2 661 192.2 661 195.3 662 195.3 662 192.2 663 192.2 663 199.0 664 199.0 664 201.2 665 201.2 665 204.4 666 204.4 666 204.4 667 204.4 667 204.4 668 204.4 668 204.4 669 204.4 669 204.4 670 204.4 670 196.0 671 196.0 671 190.1 672 190.1 672 187.2 673 187.2 673 188.2 674 188.2 674 191.7 675 191.7 675 191.7 676 191.7 676 191.9 677 191.9 677 180.3 678 180.3 678 185.7 679 185.7 679 188.2 680 188.2 680 191.7 681 191.7 681 191.7 682 191.7 682 194.3 683 194.3 683 180.4 684 180.4 684 180.5 685 180.5 685 189.1 686 189.1 686 189.2 687 189.2 687 191.7 688 191.7 688 191.7 689 191.7 689 191.8 690 191.8 690 191.8 691 191.8 691 192.2 692 192.2 692 190.7 693 190.7 693 193.3 694 193.3 694 193.3 695 193.3 695 194.2 696 194.2 696 190.0 697 190.0 697 195.6 698 195.6 698 193.6 699 193.6 699 194.3 700 194.3 700 188.2 701 188.2 701 190.6 702 190.6 702 190.3 703 190.3 703 190.6 704 190.6 704 191.4 705 191.4 705 191.6 706 191.6 706 191.7 707 191.7 707 198.9 708 198.9 708 198.9 709 198.9 709 194.8 710 194.8 710 197.9 711 197.9 711 197.9 712 197.9 712 194.6 713 194.6 713 193.4 714 193.4 714 191.8 715 191.8 715 191.9 716 191.9 716 191.9 717 191.9 717 193.1 718 193.1 718 190.2 719 190.2 719 200.1 720 200.1 720 200.3 721 200.3 721 197.0 722 197.0 722 199.9 723 199.9 723 204.4 724 204.4 724 204.4 725 204.4 725 204.4 726 204.4 726 204.4 727 204.4 727 204.4 728 204.4 728 204.4 729 204.4 729 204.4 730 204.4 730 204.4 731 204.4 731 200.3 732 200.3 732 196.9 733 196.9 733 195.3 734 195.3 734 191.9 735 191.9 735 192.0 736 192.0 736 199.2 737 199.2 737 199.2 738 199.2 738 190.9 739 190.9 739 191.0 740 191.0 740 191.1 741 191.1 741 193.4 742 193.4 742 198.9 743 198.9 743 194.2 744 194.2 744 191.8 745 191.8 745 199.2 746 199.2 746 199.2 747 199.2 747 191.6 748 191.6 748 192.8 749 192.8 749 193.8 750 193.8 750 198.7 751 198.7 751 198.7 752 198.7 752 193.1 753 193.1 753 197.1 754 197.1 754 202.0 755 202.0 755 203.1 756 203.1 756 200.0 757 200.0 757 192.8 758 192.8 758 197.6 759 197.6 759 196.2 760 196.2 760 196.3 761 196.3 761 196.2 762 196.2 762 201.5 763 201.5 763 199.1 764 199.1 764 197.2 765 197.2 765 194.3 766 194.3 766 185.5 767 185.5 767 191.4 768 191.4 768 191.5 769 191.5 769 197.1 770 197.1 770 194.7 771 194.7 771 201.8 772 201.8 772 190.6 773 190.6 773 178.8 774 178.8 774 190.6 775 190.6 775 197.6 776 197.6 776 195.8 777 195.8 777 195.9 778 195.9 778 191.4 779 191.4 779 192.1 780 192.1 780 199.6 781 199.6 781 198.8 782 198.8 782 198.8 783 198.8 783 198.8 784 198.8 784 197.0 785 197.0 785 197.1 786 197.1 786 201.8 787 201.8 787 199.8 788 199.8 788 200.9 789 200.9 789 197.6 790 197.6 790 192.7 791 192.7 791 195.3 792 195.3 792 197.4 793 197.4 793 197.5 794 197.5 794 183.4 795 183.4 795 183.5 796 183.5 796 183.6 797 183.6 797 195.4 798 195.4 798 190.5 799 190.5 799 193.0 800 193.0 800 192.8 801 192.8 801 190.0 802 190.0 802 190.1 803 190.1 803 190.2 804 190.2 804 186.2 805 186.2 805 185.4 806 185.4 806 195.0 807 195.0 807 191.0 808 191.0 808 197.8 809 197.8 809 193.8 810 193.8 810 200.0 811 200.0 811 200.1 812 200.1 812 196.4 813 196.4 813 193.9 814 193.9 814 194.3 815 194.3 815 194.4 816 194.4 816 196.5 817 196.5 817 193.5 818 193.5 818 201.9 819 201.9 819 200.1 820 200.1 820 204.4 821 204.4 821 204.4 822 204.4 822 204.4 823 204.4 823 204.4 824 204.4 824 199.5 825 199.5 825 193.8 826 193.8 826 195.7 827 195.7 827 193.7 828 193.7 828 192.7 829 192.7 829 194.9 830 194.9 830 197.0 831 197.0 831 195.1 832 195.1 832 193.8 833 193.8 833 193.9 834 193.9 834 194.0 835 194.0 835 192.6 836 192.6 836 192.8 837 192.8 837 192.7 838 192.7 838 192.8 839 192.8 839 196.3 840 196.3 840 196.8 841 196.8 841 200.3 842 200.3 842 202.0 843 202.0 843 204.4 844 204.4 844 204.4 845 204.4 845 204.4 846 204.4 846 204.4 847 204.4 847 204.4 848 204.4 848 204.4 849 204.4 849 204.4 850 204.4 850 202.1 851 202.1 851 196.5 852 196.5 852 194.8 853 194.8 853 196.9 854 196.9 854 192.0 855 192.0 855 193.0 856 193.0 856 195.5 857 195.5 857 195.5 858 195.5 858 198.6 859 198.6 859 191.1 860 191.1 860 191.2 861 191.2 861 191.3 862 191.3 862 194.6 863 194.6 863 192.4 864 192.4 864 191.6 865 191.6 865 190.7 866 190.7 866 192.4 867 192.4 867 193.7 868 193.7 868 193.6 869 193.6 869 196.1 870 196.1 870 196.1 871 196.1 871 194.6 872 194.6 872 192.9 873 192.9 873 192.9 874 192.9 874 193.0 875 193.0 875 195.3 876 195.3 876 195.4 877 195.4 877 185.9 878 185.9 878 192.4 879 192.4 879 197.1 880 197.1 880 200.0 881 200.0 881 204.4 882 204.4 882 204.4 883 204.4 883 204.4 884 204.4 884 204.4 885 204.4 885 204.4 886 204.4 886 204.4 887 204.4 887 204.4 888 204.4 888 204.4 889 204.4 889 204.4 890 204.4 890 204.4 891 204.4 891 204.4 892 204.4 892 204.4 893 204.4 893 204.4 894 204.4 894 204.4 895 204.4 895 204.4 896 204.4 896 204.4 897 204.4 897 204.4 898 204.4 898 204.4 899 204.4 899 204.4 900 204.4 900 204.4 901 204.4 901 204.4 902 204.4 902 204.4 903 204.4 903 193.0 904 193.0 904 200.3 905 200.3 905 199.3 906 199.3 906 199.4 907 199.4 907 189.9 908 189.9 908 196.9 909 196.9 909 196.9 910 196.9 910 186.8 911 186.8 911 186.9 912 186.9 912 190.8 913 190.8 913 188.4 914 188.4 914 188.4 915 188.4 915 184.4 916 184.4 916 167.5 917 167.5 917 184.4 918 184.4 918 192.8 919 192.8 919 192.8 920 192.8 920 193.8 921 193.8 921 195.9 922 195.9 922 189.9 923 189.9 923 188.4 924 188.4 924 194.5 925 194.5 925 194.9 926 194.9 926 194.9 927 194.9 927 188.6 928 188.6 928 188.7 929 188.7 929 188.9 930 188.9 930 196.1 931 196.1 931 192.0 932 192.0 932 184.0 933 184.0 933 193.4 934 193.4 934 199.7 935 199.7 935 211.4 934 211.4 934 221.2 933 221.2 933 234.4 932 234.4 932 224.8 931 224.8 931 217.7 930 217.7 930 230.9 929 230.9 929 231.0 928 231.0 928 225.9 927 225.9 927 218.5 926 218.5 926 218.6 925 218.6 925 218.5 924 218.5 924 228.5 923 228.5 923 228.4 922 228.4 922 219.0 921 219.0 921 221.6 920 221.6 920 224.8 919 224.8 919 224.9 918 224.9 918 230.2 917 230.2 917 230.2 916 230.2 916 222.7 915 222.7 915 231.5 914 231.5 914 233.9 913 233.9 913 221.6 912 221.6 912 231.8 911 231.8 911 232.0 910 232.0 910 216.6 909 216.6 909 216.7 908 216.7 908 225.9 907 225.9 907 214.1 906 214.1 906 214.2 905 214.2 905 212.7 904 212.7 904 223.8 903 223.8 903 205.6 902 205.6 902 205.6 901 205.6 901 205.6 900 205.6 900 205.6 899 205.6 899 205.6 898 205.6 898 205.6 897 205.6 897 205.6 896 205.6 896 205.6 895 205.6 895 205.6 894 205.6 894 205.6 893 205.6 893 205.6 892 205.6 892 205.6 891 205.6 891 205.6 890 205.6 890 205.6 889 205.6 889 205.6 888 205.6 888 205.6 887 205.6 887 205.6 886 205.6 886 205.6 885 205.6 885 205.6 884 205.6 884 205.6 883 205.6 883 205.6 882 205.6 882 205.6 881 205.6 881 210.2 880 210.2 880 213.2 879 213.2 879 220.6 878 220.6 878 225.0 877 225.0 877 216.2 876 216.2 876 216.2 875 216.2 875 219.2 874 219.2 874 219.3 873 219.3 873 219.4 872 219.4 872 214.8 871 214.8 871 213.7 870 213.7 870 213.8 869 213.8 869 217.1 868 217.1 868 215.7 867 215.7 867 217.5 866 217.5 866 219.4 865 219.4 865 217.8 864 217.8 864 219.0 863 219.0 863 218.1 862 218.1 862 222.8 861 222.8 861 222.9 860 222.9 860 223.0 859 223.0 859 213.2 858 213.2 858 214.6 857 214.6 857 214.7 856 214.7 856 217.5 855 217.5 855 222.0 854 222.0 854 214.4 853 214.4 853 216.1 852 216.1 852 214.3 851 214.3 851 208.8 850 208.8 850 205.6 849 205.6 849 205.6 848 205.6 848 205.6 847 205.6 847 205.6 846 205.6 846 205.6 845 205.6 845 205.6 844 205.6 844 205.6 843 205.6 843 209.4 842 209.4 842 212.0 841 212.0 841 216.4 840 216.4 840 217.2 839 217.2 839 217.6 838 217.6 838 217.8 837 217.8 837 220.0 836 220.0 836 220.2 835 220.2 835 219.1 834 219.1 834 219.3 833 219.3 833 219.4 832 219.4 832 215.7 831 215.7 831 216.3 830 216.3 830 216.8 829 216.8 829 222.9 828 222.9 828 218.6 827 218.6 827 216.8 826 216.8 826 217.6 825 217.6 825 213.5 824 213.5 824 205.6 823 205.6 823 205.6 822 205.6 822 205.6 821 205.6 821 205.6 820 205.6 820 209.1 819 209.1 819 207.7 818 207.7 818 216.0 817 216.0 817 212.6 816 212.6 816 214.8 815 214.8 815 214.9 814 214.9 814 213.9 813 213.9 813 211.7 812 211.7 812 210.6 811 210.6 811 210.7 810 210.7 810 217.0 809 217.0 809 211.3 808 211.3 808 221.0 807 221.0 807 215.8 806 215.8 806 222.4 805 222.4 805 223.0 804 223.0 804 219.1 803 219.1 803 219.2 802 219.2 802 219.3 801 219.3 801 215.6 800 215.6 800 215.6 799 215.6 799 221.8 798 221.8 798 215.9 797 215.9 797 225.6 796 225.6 796 225.7 795 225.7 795 225.9 794 225.9 794 212.6 793 212.6 793 212.7 792 212.7 792 213.9 791 213.9 791 217.2 790 217.2 790 212.4 789 212.4 789 211.2 788 211.2 788 213.2 787 213.2 787 209.7 786 209.7 786 218.9 785 218.9 785 219.0 784 219.0 784 215.4 783 215.4 783 215.5 782 215.5 782 215.6 781 215.6 781 213.1 780 213.1 780 223.8 779 223.8 779 225.5 778 225.5 778 220.4 777 220.4 777 220.5 776 220.5 776 216.8 775 216.8 775 217.1 774 217.1 774 227.1 773 227.1 773 217.1 772 217.1 772 209.2 771 209.2 771 218.4 770 218.4 770 217.8 769 217.8 769 224.3 768 224.3 768 224.4 767 224.4 767 220.8 766 220.8 766 220.7 765 220.7 765 216.6 764 216.6 764 214.2 763 214.2 763 210.2 762 210.2 762 219.2 761 219.2 761 221.2 760 221.2 760 221.3 759 221.3 759 217.8 758 217.8 758 227.8 757 227.8 757 213.7 756 213.7 756 207.8 755 207.8 755 209.4 754 209.4 754 213.4 753 213.4 753 218.5 752 218.5 752 212.9 751 212.9 751 213.0 750 213.0 750 217.8 749 217.8 749 218.6 748 218.6 748 220.4 747 220.4 747 212.4 746 212.4 746 212.5 745 212.5 745 218.9 744 218.9 744 219.7 743 219.7 743 212.9 742 212.9 742 219.9 741 219.9 741 222.9 740 222.9 740 223.1 739 223.1 739 223.2 738 223.2 738 211.4 737 211.4 737 211.4 736 211.4 736 221.3 735 221.3 735 221.4 734 221.4 734 216.8 733 216.8 733 214.9 732 214.9 732 211.7 731 211.7 731 205.6 730 205.6 730 205.6 729 205.6 729 205.6 728 205.6 728 205.6 727 205.6 727 205.6 726 205.6 726 205.6 725 205.6 725 205.6 724 205.6 724 205.6 723 205.6 723 211.2 722 211.2 722 214.7 721 214.7 721 210.8 720 210.8 720 211.2 719 211.2 719 220.8 718 220.8 718 220.4 717 220.4 717 217.7 716 217.7 716 217.8 715 217.8 715 221.4 714 221.4 714 219.5 713 219.5 713 219.1 712 219.1 712 212.8 711 212.8 711 212.8 710 212.8 710 216.6 709 216.6 709 211.6 708 211.6 708 211.6 707 211.6 707 220.3 706 220.3 706 220.4 705 220.4 705 218.8 704 218.8 704 222.7 703 222.7 703 220.4 702 220.4 702 222.6 701 222.6 701 227.1 700 227.1 700 218.8 699 218.8 699 217.0 698 217.0 698 215.2 697 215.2 697 224.2 696 224.2 696 217.9 695 217.9 695 216.7 694 216.7 694 216.7 693 216.7 693 223.0 692 223.0 692 220.0 691 220.0 691 218.2 690 218.2 690 218.7 689 218.7 689 218.7 688 218.7 688 218.8 687 218.8 687 225.2 686 225.2 686 225.3 685 225.3 685 233.0 684 233.0 684 233.1 683 233.1 683 214.9 682 214.9 682 222.4 681 222.4 681 222.5 680 222.5 680 225.3 679 225.3 679 226.8 678 226.8 678 235.8 677 235.8 677 221.4 676 221.4 676 221.0 675 221.0 675 221.1 674 221.1 674 221.8 673 221.8 673 227.9 672 227.9 672 224.2 671 224.2 671 216.5 670 216.5 670 205.6 669 205.6 669 205.6 668 205.6 668 205.6 667 205.6 667 205.6 666 205.6 666 205.6 665 205.6 665 209.2 664 209.2 664 211.6 663 211.6 663 217.7 662 217.7 662 214.8 661 214.8 661 220.6 660 220.6 660 220.8 659 220.8 659 220.9 658 220.9 658 221.9 657 221.9 657 222.1 656 222.1 656 233.0 655 233.0 655 221.8 654 221.8 654 213.2 653 213.2 653 223.3 652 223.3 652 223.5 651 223.5 651 220.6 650 220.6 650 217.3 649 217.3 649 217.4 648 217.4 648 217.5 647 217.5 647 215.6 646 215.6 646 208.3 645 208.3 645 205.6 644 205.6 644 205.6 643 205.6 643 205.6 642 205.6 642 205.6 641 205.6 641 205.6 640 205.6 640 205.6 639 205.6 639 205.6 638 205.6 638 205.6 637 205.6 637 205.6 636 205.6 636 205.6 635 205.6 635 205.6 634 205.6 634 212.2 633 212.2 633 217.8 632 217.8 632 222.4 631 222.4 631 212.1 630 212.1 630 212.2 629 212.2 629 212.2 628 212.2 628 217.1 627 217.1 627 218.0 626 218.0 626 212.4 625 212.4 625 213.4 624 213.4 624 213.5 623 213.5 623 213.5 622 213.5 622 215.9 621 215.9 621 216.0 620 216.0 620 216.1 619 216.1 619 217.8 618 217.8 618 218.6 617 218.6 617 218.7 616 218.7 616 216.3 615 216.3 615 218.9 614 218.9 614 219.0 613 219.0 613 210.2 612 210.2 612 213.9 611 213.9 611 221.0 610 221.0 610 214.4 609 214.4 609 217.6 608 217.6 608 217.7 607 217.7 607 214.7 606 214.7 606 217.0 605 217.0 605 217.1 604 217.1 604 218.1 603 218.1 603 218.2 602 218.2 602 214.3 601 214.3 601 222.3 600 222.3 600 223.1 599 223.1 599 214.3 598 214.3 598 212.0 597 212.0 597 211.7 596 211.7 596 226.3 595 226.3 595 217.7 594 217.7 594 212.5 593 212.5 593 221.9 592 221.9 592 229.0 591 229.0 591 220.0 590 220.0 590 231.6 589 231.6 589 231.9 588 231.9 588 225.9 587 225.9 587 226.2 586 226.2 586 226.4 585 226.4 585 214.9 584 214.9 584 215.0 583 215.0 583 223.6 582 223.6 582 224.8 581 224.8 581 214.6 580 214.6 580 205.6 579 205.6 579 209.5 578 209.5 578 208.5 577 208.5 577 211.6 576 211.6 576 211.9 575 211.9 575 212.0 574 212.0 574 216.9 573 216.9 573 217.0 572 217.0 572 210.8 571 210.8 571 210.9 570 210.9 570 210.9 569 210.9 569 214.0 568 214.0 568 214.1 567 214.1 567 211.9 566 211.9 566 217.8 565 217.8 565 217.9 564 217.9 564 214.9 563 214.9 563 214.2 562 214.2 562 213.7 561 213.7 561 213.5 560 213.5 560 213.5 559 213.5 559 213.6 558 213.6 558 213.7 557 213.7 557 213.7 556 213.7 556 215.3 555 215.3 555 215.4 554 215.4 554 215.5 553 215.5 553 217.7 552 217.7 552 213.7 551 213.7 551 213.7 550 213.7 550 213.8 549 213.8 549 212.9 548 212.9 548 211.7 547 211.7 547 211.8 546 211.8 546 215.1 545 215.1 545 211.9 544 211.9 544 209.2 543 209.2 543 212.5 542 212.5 542 212.8 541 212.8 541 215.8 540 215.8 540 216.4 539 216.4 539 214.6 538 214.6 538 216.5 537 216.5 537 220.8 536 220.8 536 221.0 535 221.0 535 221.2 534 221.2 534 234.4 533 234.4 533 221.2 532 221.2 532 219.8 531 219.8 531 220.0 530 220.0 530 216.9 529 216.9 529 220.8 528 220.8 528 216.5 527 216.5 527 213.3 526 213.3 526 211.3 525 211.3 525 222.2 524 222.2 524 219.6 523 219.6 523 221.4 522 221.4 522 210.1 521 210.1 521 210.4 520 210.4 520 205.6 519 205.6 519 205.6 518 205.6 518 207.0 517 207.0 517 208.1 516 208.1 516 209.8 515 209.8 515 210.2 514 210.2 514 208.7 513 208.7 513 208.8 512 208.8 512 208.3 511 208.3 511 206.8 510 206.8 510 209.7 509 209.7 509 209.8 508 209.8 508 211.6 507 211.6 507 213.1 506 213.1 506 213.2 505 213.2 505 219.3 504 219.3 504 215.1 503 215.1 503 218.5 502 218.5 502 220.1 501 220.1 501 218.1 500 218.1 500 218.1 499 218.1 499 218.9 498 218.9 498 219.0 497 219.0 497 219.0 496 219.0 496 210.8 495 210.8 495 223.7 494 223.7 494 223.8 493 223.8 493 221.4 492 221.4 492 215.3 491 215.3 491 218.9 490 218.9 490 218.9 489 218.9 489 213.2 488 213.2 488 222.0 487 222.0 487 216.2 486 216.2 486 216.2 485 216.2 485 216.3 484 216.3 484 218.1 483 218.1 483 224.9 482 224.9 482 215.6 481 215.6 481 216.4 480 216.4 480 216.5 479 216.5 479 216.5 478 216.5 478 219.0 477 219.0 477 219.1 476 219.1 476 226.7 475 226.7 475 226.7 474 226.7 474 226.8 473 226.8 473 218.4 472 218.4 472 217.9 471 217.9 471 217.9 470 217.9 470 220.4 469 220.4 469 220.4 468 220.4 468 220.4 467 220.4 467 216.8 466 216.8 466 214.4 465 214.4 465 214.4 464 214.4 464 221.3 463 221.3 463 221.4 462 221.4 462 221.4 461 221.4 461 217.8 460 217.8 460 212.2 459 212.2 459 225.4 458 225.4 458 225.5 457 225.5 457 217.9 456 217.9 456 217.9 455 217.9 455 218.0 454 218.0 454 214.2 453 214.2 453 225.8 452 225.8 452 218.4 451 218.4 451 220.7 450 220.7 450 216.8 449 216.8 449 216.8 448 216.8 448 215.2 447 215.2 447 222.6 446 222.6 446 217.2 445 217.2 445 217.4 444 217.4 444 221.5 443 221.5 443 220.3 442 220.3 442 222.8 441 222.8 441 209.4 440 209.4 440 209.4 439 209.4 439 210.4 438 210.4 438 220.8 437 220.8 437 216.7 436 216.7 436 216.8 435 216.8 435 219.8 434 219.8 434 216.5 433 216.5 433 220.5 432 220.5 432 222.8 431 222.8 431 215.7 430 215.7 430 205.6 429 205.6 429 205.6 428 205.6 428 205.6 427 205.6 427 205.6 426 205.6 426 205.6 425 205.6 425 205.6 424 205.6 424 205.6 423 205.6 423 205.6 422 205.6 422 205.6 421 205.6 421 206.7 420 206.7 420 210.1 419 210.1 419 214.6 418 214.6 418 210.9 417 210.9 417 211.0 416 211.0 416 212.8 415 212.8 415 212.9 414 212.9 414 213.0 413 213.0 413 212.1 412 212.1 412 212.2 411 212.2 411 212.3 410 212.3 410 212.2 409 212.2 409 221.4 408 221.4 408 212.1 407 212.1 407 210.2 406 210.2 406 222.3 405 222.3 405 216.0 404 216.0 404 211.7 403 211.7 403 205.6 402 205.6 402 205.6 401 205.6 401 205.6 400 205.6 400 205.6 399 205.6 399 205.6 398 205.6 398 205.6 397 205.6 397 209.4 396 209.4 396 216.5 395 216.5 395 217.8 394 217.8 394 218.5 393 218.5 393 216.8 392 216.8 392 216.8 391 216.8 391 213.0 390 213.0 390 218.7 389 218.7 389 214.3 388 214.3 388 214.3 387 214.3 387 215.1 386 215.1 386 215.1 385 215.1 385 215.3 384 215.3 384 215.3 383 215.3 383 212.3 382 212.3 382 212.3 381 212.3 381 215.5 380 215.5 380 212.9 379 212.9 379 218.0 378 218.0 378 214.3 377 214.3 377 221.2 376 221.2 376 216.1 375 216.1 375 216.1 374 216.1 374 210.2 373 210.2 373 216.0 372 216.0 372 216.1 371 216.1 371 216.1 370 216.1 370 217.8 369 217.8 369 214.1 368 214.1 368 212.6 367 212.6 367 212.6 366 212.6 366 224.4 365 224.4 365 219.1 364 219.1 364 219.2 363 219.2 363 213.1 362 213.1 362 217.4 361 217.4 361 217.4 360 217.4 360 217.6 359 217.6 359 222.1 358 222.1 358 222.1 357 222.1 357 223.6 356 223.6 356 215.1 355 215.1 355 227.2 354 227.2 354 223.2 353 223.2 353 226.2 352 226.2 352 210.7 351 210.7 351 210.8 350 210.8 350 213.1 349 213.1 349 220.2 348 220.2 348 220.2 347 220.2 347 220.3 346 220.3 346 214.1 345 214.1 345 214.1 344 214.1 344 220.7 343 220.7 343 214.4 342 214.4 342 218.1 341 218.1 341 213.5 340 213.5 340 218.0 339 218.0 339 215.9 338 215.9 338 216.3 337 216.3 337 212.5 336 212.5 336 205.6 335 205.6 335 205.6 334 205.6 334 205.6 333 205.6 333 205.6 332 205.6 332 205.6 331 205.6 331 209.0 330 209.0 330 210.1 329 210.1 329 212.0 328 212.0 328 216.9 327 216.9 327 217.0 326 217.0 326 216.1 325 216.1 325 210.7 324 210.7 324 210.7 323 210.7 323 210.8 322 210.8 322 212.5 321 212.5 321 216.7 320 216.7 320 212.5 319 212.5 319 214.3 318 214.3 318 214.4 317 214.4 317 214.5 316 214.5 316 219.2 315 219.2 315 219.4 314 219.4 314 217.1 313 217.1 313 212.7 312 212.7 312 205.6 311 205.6 311 205.6 310 205.6 310 205.6 309 205.6 309 205.6 308 205.6 308 205.6 307 205.6 307 205.6 306 205.6 306 205.6 305 205.6 305 205.6 304 205.6 304 205.6 303 205.6 303 205.6 302 205.6 302 205.6 301 205.6 301 205.6 300 205.6 300 208.9 299 208.9 299 211.4 298 211.4 298 225.1 297 225.1 297 226.4 296 226.4 296 226.7 295 226.7 295 222.8 294 222.8 294 223.1 293 223.1 293 220.5 292 220.5 292 220.7 291 220.7 291 214.3 290 214.3 290 214.4 289 214.4 289 214.5 288 214.5 288 215.0 287 215.0 287 218.2 286 218.2 286 216.2 285 216.2 285 211.8 284 211.8 284 205.6 283 205.6 283 205.6 282 205.6 282 205.6 281 205.6 281 205.6 280 205.6 280 205.6 279 205.6 279 205.6 278 205.6 278 205.6 277 205.6 277 205.6 276 205.6 276 205.6 275 205.6 275 205.6 274 205.6 274 205.6 273 205.6 273 205.6 272 205.6 272 205.6 271 205.6 271 205.6 270 205.6 270 205.6 269 205.6 269 205.6 268 205.6 268 205.6 267 205.6 267 205.6 266 205.6 266 205.6 265 205.6 265 205.6 264 205.6 264 205.6 263 205.6 263 205.6 262 205.6 262 205.6 261 205.6 261 205.6 260 205.6 260 205.6 259 205.6 259 205.6 258 205.6 258 205.6 257 205.6 257 205.6 256 205.6 256 205.6 255 205.6 255 205.6 254 205.6 254 205.6 253 205.6 253 205.6 252 205.6 252 205.6 251 205.6 251 210.3 250 210.3 250 213.9 249 213.9 249 217.2 248 217.2 248 217.9 247 217.9 247 218.7 246 218.7 246 218.8 245 218.8 245 218.9 244 218.9 244 211.6 243 211.6 243 211.6 242 211.6 242 217.0 241 217.0 241 217.0 240 217.0 240 215.0 239 215.0 239 217.1 238 217.1 238 221.3 237 221.3 237 221.4 236 221.4 236 221.5 235 221.5 235 211.9 234 211.9 234 217.4 233 217.4 233 230.7 232 230.7 232 215.8 231 215.8 231 215.9 230 215.9 230 215.9 229 215.9 229 212.7 228 212.7 228 212.8 227 212.8 227 232.6 226 232.6 226 232.8 225 232.8 225 211.3 224 211.3 224 219.5 223 219.5 223 220.1 222 220.1 222 217.7 221 217.7 221 215.1 220 215.1 220 205.6 219 205.6 219 205.6 218 205.6 218 205.6 217 205.6 217 205.6 216 205.6 216 205.6 215 205.6 215 211.9 214 211.9 214 215.8 213 215.8 213 225.8 212 225.8 212 219.5 211 219.5 211 219.7 210 219.7 210 219.8 209 219.8 209 217.3 208 217.3 208 217.8 207 217.8 207 219.4 206 219.4 206 219.6 205 219.6 205 218.0 204 218.0 204 218.1 203 218.1 203 218.2 202 218.2 202 215.6 201 215.6 201 216.6 200 216.6 200 216.7 199 216.7 199 218.3 198 218.3 198 225.0 197 225.0 197 224.6 196 224.6 196 224.8 195 224.8 195 222.9 194 222.9 194 212.4 193 212.4 193 205.6 192 205.6 192 205.6 191 205.6 191 205.6 190 205.6 190 207.1 189 207.1 189 208.3 188 208.3 188 210.8 187 210.8 187 211.1 186 211.1 186 212.6 185 212.6 185 212.7 184 212.7 184 207.8 183 207.8 183 210.1 182 210.1 182 211.8 181 211.8 181 211.9 180 211.9 180 211.2 179 211.2 179 211.2 178 211.2 178 211.3 177 211.3 177 211.1 176 211.1 176 211.2 175 211.2 175 211.3 174 211.3 174 211.1 173 211.1 173 209.1 172 209.1 172 208.8 171 208.8 171 209.8 170 209.8 170 212.6 169 212.6 169 215.5 168 215.5 168 210.2 167 210.2 167 216.0 166 216.0 166 219.8 165 219.8 165 214.7 164 214.7 164 214.8 163 214.8 163 215.0 162 215.0 162 217.9 161 217.9 161 215.9 160 215.9 160 211.7 159 211.7 159 207.2 158 207.2 158 212.4 157 212.4 157 219.3 156 219.3 156 213.7 155 213.7 155 213.7 154 213.7 154 221.6 153 221.6 153 216.3 152 216.3 152 216.4 151 216.4 151 217.5 150 217.5 150 214.8 149 214.8 149 216.9 148 216.9 148 216.9 147 216.9 147 217.0 146 217.0 146 220.3 145 220.3 145 220.4 144 220.4 144 226.6 143 226.6 143 219.8 142 219.8 142 209.9 141 209.9 141 212.7 140 212.7 140 219.0 139 219.0 139 213.5 138 213.5 138 213.6 137 213.6 137 217.4 136 217.4 136 219.7 135 219.7 135 213.1 134 213.1 134 221.4 133 221.4 133 221.5 132 221.5 132 221.6 131 221.6 131 212.4 130 212.4 130 216.2 129 216.2 129 216.2 128 216.2 128 216.3 127 216.3 127 212.9 126 212.9 126 209.7 125 209.7 125 211.2 124 211.2 124 212.1 123 212.1 123 215.4 122 215.4 122 217.5 121 217.5 121 217.6 120 217.6 120 216.3 119 216.3 119 216.4 118 216.4 118 210.0 117 210.0 117 213.8 116 213.8 116 213.9 115 213.9 115 213.9 114 213.9 114 215.4 113 215.4 113 221.0 112 221.0 112 217.2 111 217.2 111 224.4 110 224.4 110 224.5 109 224.5 109 218.9 108 218.9 108 219.0 107 219.0 107 216.9 106 216.9 106 217.0 105 217.0 105 217.6 104 217.6 104 217.7 103 217.7 103 217.8 102 217.8 102 217.3 101 217.3 101 215.5 100 215.5 100 205.6 99 205.6 99 205.6 98 205.6 98 205.6 97 205.6 97 205.6 96 205.6 96 205.6 95 205.6 95 205.6 94 205.6 94 205.6 93 205.6Z" fill="#d0b2fa"/></svg>
<div class="a" style="left:278px;top:245px;width:330px;height:41px;background:linear-gradient(#3d3d3d,#393939);border:1px solid #1c1c1c;border-radius:5px;overflow:hidden"></div><div class="a" style="left:284px;top:249px;font-size:11.5px;color:#8b7cf2;line-height:14px;letter-spacing:0.4px">BV 1_2</div><svg class="a" style="left:0;top:0" width="935" height="458"><path d="M280 273.6 281 273.6 281 273.6 282 273.6 282 273.6 283 273.6 283 273.6 284 273.6 284 273.6 285 273.6 285 273.2 286 273.2 286 273.0 287 273.0 287 273.0 288 273.0 288 272.5 289 272.5 289 273.0 290 273.0 290 273.4 291 273.4 291 273.6 292 273.6 292 273.6 293 273.6 293 273.6 294 273.6 294 273.6 295 273.6 295 273.6 296 273.6 296 273.6 297 273.6 297 273.6 298 273.6 298 273.6 299 273.6 299 273.6 300 273.6 300 273.6 301 273.6 301 273.6 302 273.6 302 273.6 303 273.6 303 273.6 304 273.6 304 273.6 305 273.6 305 273.6 306 273.6 306 273.6 307 273.6 307 273.6 308 273.6 308 273.6 309 273.6 309 273.6 310 273.6 310 273.6 311 273.6 311 273.6 312 273.6 312 273.6 313 273.6 313 273.6 314 273.6 314 273.6 315 273.6 315 273.5 316 273.5 316 273.4 317 273.4 317 272.9 318 272.9 318 273.0 319 273.0 319 272.8 320 272.8 320 273.6 321 273.6 321 273.6 322 273.6 322 273.6 323 273.6 323 273.6 324 273.6 324 273.6 325 273.6 325 273.6 326 273.6 326 273.6 327 273.6 327 273.6 328 273.6 328 273.6 329 273.6 329 273.6 330 273.6 330 273.6 331 273.6 331 273.6 332 273.6 332 273.6 333 273.6 333 273.6 334 273.6 334 273.6 335 273.6 335 273.6 336 273.6 336 273.6 337 273.6 337 273.6 338 273.6 338 273.6 339 273.6 339 273.6 340 273.6 340 273.6 341 273.6 341 273.6 342 273.6 342 273.3 343 273.3 343 271.6 344 271.6 344 272.5 345 272.5 345 272.5 346 272.5 346 272.5 347 272.5 347 272.0 348 272.0 348 272.0 349 272.0 349 273.1 350 273.1 350 273.2 351 273.2 351 273.5 352 273.5 352 273.6 353 273.6 353 273.6 354 273.6 354 273.6 355 273.6 355 273.6 356 273.6 356 273.6 357 273.6 357 273.6 358 273.6 358 273.6 359 273.6 359 273.6 360 273.6 360 273.6 361 273.6 361 273.6 362 273.6 362 273.6 363 273.6 363 273.6 364 273.6 364 273.6 365 273.6 365 273.6 366 273.6 366 273.6 367 273.6 367 273.6 368 273.6 368 273.6 369 273.6 369 273.6 370 273.6 370 273.6 371 273.6 371 273.6 372 273.6 372 273.6 373 273.6 373 273.6 374 273.6 374 273.6 375 273.6 375 273.6 376 273.6 376 273.6 377 273.6 377 273.6 378 273.6 378 273.6 379 273.6 379 273.6 380 273.6 380 273.6 381 273.6 381 273.6 382 273.6 382 273.6 383 273.6 383 273.6 384 273.6 384 273.6 385 273.6 385 273.6 386 273.6 386 273.6 387 273.6 387 273.6 388 273.6 388 273.6 389 273.6 389 273.6 390 273.6 390 273.6 391 273.6 391 273.6 392 273.6 392 273.6 393 273.6 393 273.6 394 273.6 394 273.6 395 273.6 395 273.6 396 273.6 396 273.6 397 273.6 397 273.6 398 273.6 398 273.6 399 273.6 399 273.6 400 273.6 400 273.6 401 273.6 401 273.6 402 273.6 402 273.6 403 273.6 403 273.6 404 273.6 404 273.1 405 273.1 405 273.6 406 273.6 406 273.6 407 273.6 407 273.6 408 273.6 408 273.6 409 273.6 409 273.6 410 273.6 410 273.6 411 273.6 411 273.6 412 273.6 412 273.6 413 273.6 413 273.6 414 273.6 414 273.6 415 273.6 415 273.6 416 273.6 416 273.6 417 273.6 417 273.6 418 273.6 418 273.6 419 273.6 419 273.6 420 273.6 420 273.6 421 273.6 421 273.6 422 273.6 422 273.6 423 273.6 423 273.6 424 273.6 424 273.6 425 273.6 425 273.6 426 273.6 426 273.6 427 273.6 427 273.6 428 273.6 428 273.6 429 273.6 429 273.6 430 273.6 430 273.6 431 273.6 431 273.6 432 273.6 432 273.6 433 273.6 433 273.6 434 273.6 434 273.6 435 273.6 435 273.6 436 273.6 436 273.2 437 273.2 437 273.1 438 273.1 438 273.4 439 273.4 439 273.6 440 273.6 440 273.6 441 273.6 441 273.6 442 273.6 442 273.6 443 273.6 443 273.6 444 273.6 444 273.6 445 273.6 445 273.6 446 273.6 446 273.6 447 273.6 447 273.6 448 273.6 448 273.6 449 273.6 449 273.6 450 273.6 450 273.6 451 273.6 451 273.6 452 273.6 452 273.6 453 273.6 453 273.6 454 273.6 454 273.6 455 273.6 455 273.6 456 273.6 456 273.6 457 273.6 457 273.6 458 273.6 458 273.6 459 273.6 459 273.6 460 273.6 460 273.6 461 273.6 461 273.6 462 273.6 462 273.6 463 273.6 463 273.6 464 273.6 464 273.6 465 273.6 465 273.6 466 273.6 466 273.6 467 273.6 467 273.6 468 273.6 468 273.6 469 273.6 469 273.6 470 273.6 470 273.6 471 273.6 471 273.6 472 273.6 472 272.9 473 272.9 473 272.6 474 272.6 474 273.3 475 273.3 475 273.3 476 273.3 476 272.2 477 272.2 477 272.3 478 272.3 478 273.2 479 273.2 479 273.6 480 273.6 480 273.6 481 273.6 481 273.6 482 273.6 482 273.6 483 273.6 483 273.6 484 273.6 484 273.6 485 273.6 485 273.6 486 273.6 486 273.6 487 273.6 487 273.6 488 273.6 488 273.6 489 273.6 489 273.6 490 273.6 490 273.6 491 273.6 491 273.6 492 273.6 492 273.6 493 273.6 493 273.6 494 273.6 494 273.6 495 273.6 495 273.6 496 273.6 496 273.6 497 273.6 497 273.6 498 273.6 498 273.6 499 273.6 499 273.6 500 273.6 500 273.6 501 273.6 501 273.6 502 273.6 502 273.6 503 273.6 503 273.6 504 273.6 504 273.6 505 273.6 505 273.6 506 273.6 506 273.6 507 273.6 507 273.6 508 273.6 508 273.6 509 273.6 509 273.6 510 273.6 510 273.6 511 273.6 511 273.6 512 273.6 512 273.6 513 273.6 513 273.6 514 273.6 514 273.6 515 273.6 515 273.6 516 273.6 516 273.6 517 273.6 517 273.6 518 273.6 518 273.6 519 273.6 519 273.6 520 273.6 520 273.6 521 273.6 521 273.6 522 273.6 522 273.6 523 273.6 523 272.3 524 272.3 524 273.6 525 273.6 525 273.6 526 273.6 526 273.1 527 273.1 527 273.3 528 273.3 528 273.3 529 273.3 529 272.1 530 272.1 530 272.1 531 272.1 531 272.5 532 272.5 532 271.5 533 271.5 533 271.7 534 271.7 534 273.6 535 273.6 535 273.6 536 273.6 536 273.6 537 273.6 537 273.6 538 273.6 538 273.6 539 273.6 539 273.6 540 273.6 540 273.6 541 273.6 541 273.6 542 273.6 542 273.6 543 273.6 543 273.6 544 273.6 544 273.6 545 273.6 545 273.6 546 273.6 546 273.6 547 273.6 547 273.6 548 273.6 548 273.6 549 273.6 549 273.6 550 273.6 550 273.6 551 273.6 551 273.6 552 273.6 552 273.6 553 273.6 553 273.6 554 273.6 554 273.6 555 273.6 555 273.6 556 273.6 556 273.6 557 273.6 557 273.6 558 273.6 558 273.6 559 273.6 559 273.6 560 273.6 560 273.6 561 273.6 561 273.6 562 273.6 562 273.6 563 273.6 563 273.6 564 273.6 564 273.6 565 273.6 565 273.6 566 273.6 566 273.6 567 273.6 567 273.6 568 273.6 568 273.6 569 273.6 569 273.6 570 273.6 570 273.6 571 273.6 571 273.6 572 273.6 572 273.6 573 273.6 573 273.6 574 273.6 574 273.6 575 273.6 575 273.6 576 273.6 576 273.6 577 273.6 577 273.6 578 273.6 578 273.6 579 273.6 579 273.2 580 273.2 580 272.3 581 272.3 581 271.8 582 271.8 582 273.0 583 273.0 583 273.0 584 273.0 584 273.6 585 273.6 585 272.8 586 272.8 586 272.8 587 272.8 587 272.8 588 272.8 588 272.4 589 272.4 589 272.4 590 272.4 590 271.6 591 271.6 591 273.6 592 273.6 592 273.6 593 273.6 593 273.6 594 273.6 594 273.6 595 273.6 595 273.6 596 273.6 596 273.6 597 273.6 597 273.6 598 273.6 598 273.6 599 273.6 599 273.6 600 273.6 600 273.6 601 273.6 601 273.6 602 273.6 602 273.6 603 273.6 603 273.6 604 273.6 604 273.6 605 273.6 605 273.6 606 273.6 606 275.4 605 275.4 605 275.4 604 275.4 604 275.4 603 275.4 603 275.4 602 275.4 602 275.4 601 275.4 601 275.4 600 275.4 600 275.4 599 275.4 599 275.4 598 275.4 598 275.4 597 275.4 597 275.4 596 275.4 596 275.4 595 275.4 595 275.4 594 275.4 594 275.4 593 275.4 593 275.4 592 275.4 592 275.4 591 275.4 591 276.9 590 276.9 590 276.7 589 276.7 589 276.7 588 276.7 588 276.2 587 276.2 587 276.2 586 276.2 586 276.4 585 276.4 585 275.4 584 275.4 584 276.1 583 276.1 583 276.1 582 276.1 582 276.7 581 276.7 581 276.3 580 276.3 580 275.6 579 275.6 579 275.4 578 275.4 578 275.4 577 275.4 577 275.4 576 275.4 576 275.4 575 275.4 575 275.4 574 275.4 574 275.4 573 275.4 573 275.4 572 275.4 572 275.4 571 275.4 571 275.4 570 275.4 570 275.4 569 275.4 569 275.4 568 275.4 568 275.4 567 275.4 567 275.4 566 275.4 566 275.4 565 275.4 565 275.4 564 275.4 564 275.4 563 275.4 563 275.4 562 275.4 562 275.4 561 275.4 561 275.4 560 275.4 560 275.4 559 275.4 559 275.4 558 275.4 558 275.4 557 275.4 557 275.4 556 275.4 556 275.4 555 275.4 555 275.4 554 275.4 554 275.4 553 275.4 553 275.4 552 275.4 552 275.4 551 275.4 551 275.4 550 275.4 550 275.4 549 275.4 549 275.4 548 275.4 548 275.4 547 275.4 547 275.4 546 275.4 546 275.4 545 275.4 545 275.4 544 275.4 544 275.4 543 275.4 543 275.4 542 275.4 542 275.4 541 275.4 541 275.4 540 275.4 540 275.4 539 275.4 539 275.4 538 275.4 538 275.4 537 275.4 537 275.4 536 275.4 536 275.5 535 275.5 535 275.4 534 275.4 534 277.6 533 277.6 533 277.8 532 277.8 532 276.6 531 276.6 531 276.7 530 276.7 530 276.7 529 276.7 529 275.5 528 275.5 528 275.7 527 275.7 527 276.0 526 276.0 526 275.4 525 275.4 525 275.4 524 275.4 524 276.5 523 276.5 523 275.4 522 275.4 522 275.4 521 275.4 521 275.4 520 275.4 520 275.4 519 275.4 519 275.4 518 275.4 518 275.4 517 275.4 517 275.4 516 275.4 516 275.4 515 275.4 515 275.4 514 275.4 514 275.4 513 275.4 513 275.4 512 275.4 512 275.4 511 275.4 511 275.4 510 275.4 510 275.4 509 275.4 509 275.4 508 275.4 508 275.4 507 275.4 507 275.4 506 275.4 506 275.4 505 275.4 505 275.4 504 275.4 504 275.4 503 275.4 503 275.4 502 275.4 502 275.4 501 275.4 501 275.4 500 275.4 500 275.4 499 275.4 499 275.4 498 275.4 498 275.4 497 275.4 497 275.4 496 275.4 496 275.4 495 275.4 495 275.4 494 275.4 494 275.4 493 275.4 493 275.4 492 275.4 492 275.4 491 275.4 491 275.4 490 275.4 490 275.4 489 275.4 489 275.4 488 275.4 488 275.4 487 275.4 487 275.4 486 275.4 486 275.4 485 275.4 485 275.4 484 275.4 484 275.4 483 275.4 483 275.4 482 275.4 482 275.4 481 275.4 481 275.4 480 275.4 480 275.4 479 275.4 479 275.9 478 275.9 478 276.4 477 276.4 477 276.5 476 276.5 476 275.9 475 275.9 475 275.9 474 275.9 474 276.6 473 276.6 473 276.3 472 276.3 472 275.4 471 275.4 471 275.4 470 275.4 470 275.4 469 275.4 469 275.4 468 275.4 468 275.4 467 275.4 467 275.4 466 275.4 466 275.4 465 275.4 465 275.4 464 275.4 464 275.4 463 275.4 463 275.4 462 275.4 462 275.4 461 275.4 461 275.4 460 275.4 460 275.4 459 275.4 459 275.4 458 275.4 458 275.4 457 275.4 457 275.4 456 275.4 456 275.4 455 275.4 455 275.4 454 275.4 454 275.4 453 275.4 453 275.4 452 275.4 452 275.4 451 275.4 451 275.4 450 275.4 450 275.4 449 275.4 449 275.4 448 275.4 448 275.4 447 275.4 447 275.4 446 275.4 446 275.4 445 275.4 445 275.4 444 275.4 444 275.4 443 275.4 443 275.4 442 275.4 442 275.4 441 275.4 441 275.4 440 275.4 440 275.4 439 275.4 439 275.7 438 275.7 438 275.7 437 275.7 437 275.6 436 275.6 436 275.4 435 275.4 435 275.4 434 275.4 434 275.4 433 275.4 433 275.4 432 275.4 432 275.4 431 275.4 431 275.4 430 275.4 430 275.4 429 275.4 429 275.4 428 275.4 428 275.4 427 275.4 427 275.4 426 275.4 426 275.4 425 275.4 425 275.4 424 275.4 424 275.4 423 275.4 423 275.4 422 275.4 422 275.4 421 275.4 421 275.4 420 275.4 420 275.4 419 275.4 419 275.4 418 275.4 418 275.4 417 275.4 417 275.4 416 275.4 416 275.4 415 275.4 415 275.4 414 275.4 414 275.4 413 275.4 413 275.4 412 275.4 412 275.4 411 275.4 411 275.4 410 275.4 410 275.4 409 275.4 409 275.4 408 275.4 408 275.4 407 275.4 407 275.4 406 275.4 406 275.4 405 275.4 405 276.2 404 276.2 404 275.4 403 275.4 403 275.4 402 275.4 402 275.4 401 275.4 401 275.4 400 275.4 400 275.4 399 275.4 399 275.4 398 275.4 398 275.4 397 275.4 397 275.4 396 275.4 396 275.4 395 275.4 395 275.4 394 275.4 394 275.4 393 275.4 393 275.4 392 275.4 392 275.4 391 275.4 391 275.4 390 275.4 390 275.4 389 275.4 389 275.4 388 275.4 388 275.4 387 275.4 387 275.4 386 275.4 386 275.4 385 275.4 385 275.4 384 275.4 384 275.4 383 275.4 383 275.4 382 275.4 382 275.4 381 275.4 381 275.4 380 275.4 380 275.4 379 275.4 379 275.4 378 275.4 378 275.4 377 275.4 377 275.4 376 275.4 376 275.4 375 275.4 375 275.4 374 275.4 374 275.4 373 275.4 373 275.4 372 275.4 372 275.4 371 275.4 371 275.5 370 275.5 370 275.4 369 275.4 369 275.4 368 275.4 368 275.4 367 275.4 367 275.4 366 275.4 366 275.4 365 275.4 365 275.4 364 275.4 364 275.4 363 275.4 363 275.4 362 275.4 362 275.4 361 275.4 361 275.4 360 275.4 360 275.4 359 275.4 359 275.4 358 275.4 358 275.4 357 275.4 357 275.4 356 275.4 356 275.4 355 275.4 355 275.4 354 275.4 354 275.4 353 275.4 353 275.4 352 275.4 352 275.4 351 275.4 351 275.7 350 275.7 350 275.9 349 275.9 349 277.4 348 277.4 348 277.4 347 277.4 347 276.1 346 276.1 346 276.1 345 276.1 345 276.1 344 276.1 344 277.3 343 277.3 343 275.7 342 275.7 342 275.4 341 275.4 341 275.4 340 275.4 340 275.4 339 275.4 339 275.4 338 275.4 338 275.4 337 275.4 337 275.4 336 275.4 336 275.4 335 275.4 335 275.4 334 275.4 334 275.4 333 275.4 333 275.4 332 275.4 332 275.4 331 275.4 331 275.4 330 275.4 330 275.4 329 275.4 329 275.4 328 275.4 328 275.4 327 275.4 327 275.4 326 275.4 326 275.4 325 275.4 325 275.4 324 275.4 324 275.4 323 275.4 323 275.4 322 275.4 322 275.4 321 275.4 321 275.4 320 275.4 320 276.3 319 276.3 319 276.1 318 276.1 318 276.2 317 276.2 317 275.6 316 275.6 316 275.4 315 275.4 315 275.4 314 275.4 314 275.4 313 275.4 313 275.4 312 275.4 312 275.4 311 275.4 311 275.4 310 275.4 310 275.4 309 275.4 309 275.4 308 275.4 308 275.4 307 275.4 307 275.4 306 275.4 306 275.4 305 275.4 305 275.4 304 275.4 304 275.4 303 275.4 303 275.4 302 275.4 302 275.4 301 275.4 301 275.4 300 275.4 300 275.4 299 275.4 299 275.4 298 275.4 298 275.4 297 275.4 297 275.4 296 275.4 296 275.4 295 275.4 295 275.4 294 275.4 294 275.4 293 275.4 293 275.4 292 275.4 292 275.4 291 275.4 291 275.5 290 275.5 290 275.9 289 275.9 289 276.8 288 276.8 288 275.8 287 275.8 287 275.8 286 275.8 286 275.6 285 275.6 285 275.4 284 275.4 284 275.4 283 275.4 283 275.4 282 275.4 282 275.4 281 275.4 281 275.4 280 275.4Z" fill="#8e8e8e"/></svg>
<svg class="a" style="left:330px;top:247px" width="20" height="20"><circle cx="9" cy="9" r="4.5" fill="none" stroke="#8b7cf2" stroke-width="1.4"/></svg>
<div class="a" style="left:278px;top:288px;width:330px;height:43px;background:linear-gradient(#3d3d3d,#393939);border:1px solid #1c1c1c;border-radius:5px;overflow:hidden"></div><div class="a" style="left:284px;top:292px;font-size:11.5px;color:#c54ae2;line-height:14px;letter-spacing:0.4px">BV 2_2</div><svg class="a" style="left:0;top:0" width="935" height="458"><path d="M280 318.6 281 318.6 281 318.6 282 318.6 282 318.6 283 318.6 283 318.6 284 318.6 284 318.2 285 318.2 285 318.6 286 318.6 286 318.6 287 318.6 287 318.6 288 318.6 288 318.6 289 318.6 289 318.6 290 318.6 290 318.6 291 318.6 291 318.6 292 318.6 292 318.6 293 318.6 293 318.6 294 318.6 294 318.6 295 318.6 295 318.6 296 318.6 296 318.6 297 318.6 297 318.6 298 318.6 298 318.6 299 318.6 299 318.6 300 318.6 300 318.6 301 318.6 301 318.6 302 318.6 302 318.6 303 318.6 303 318.6 304 318.6 304 318.6 305 318.6 305 318.6 306 318.6 306 318.6 307 318.6 307 318.6 308 318.6 308 318.6 309 318.6 309 318.6 310 318.6 310 318.6 311 318.6 311 318.6 312 318.6 312 318.6 313 318.6 313 318.6 314 318.6 314 318.6 315 318.6 315 318.6 316 318.6 316 318.6 317 318.6 317 318.6 318 318.6 318 318.4 319 318.4 319 318.6 320 318.6 320 318.6 321 318.6 321 318.6 322 318.6 322 318.6 323 318.6 323 318.6 324 318.6 324 318.6 325 318.6 325 318.6 326 318.6 326 318.6 327 318.6 327 318.6 328 318.6 328 318.6 329 318.6 329 318.6 330 318.6 330 318.6 331 318.6 331 318.6 332 318.6 332 318.6 333 318.6 333 318.6 334 318.6 334 318.6 335 318.6 335 318.6 336 318.6 336 318.6 337 318.6 337 318.6 338 318.6 338 318.6 339 318.6 339 318.6 340 318.6 340 318.6 341 318.6 341 318.5 342 318.5 342 318.2 343 318.2 343 317.9 344 317.9 344 318.0 345 318.0 345 318.1 346 318.1 346 318.6 347 318.6 347 318.6 348 318.6 348 318.6 349 318.6 349 318.6 350 318.6 350 318.6 351 318.6 351 318.6 352 318.6 352 318.6 353 318.6 353 318.6 354 318.6 354 318.6 355 318.6 355 318.6 356 318.6 356 318.6 357 318.6 357 318.6 358 318.6 358 318.6 359 318.6 359 318.6 360 318.6 360 318.6 361 318.6 361 318.6 362 318.6 362 318.6 363 318.6 363 318.6 364 318.6 364 318.6 365 318.6 365 318.6 366 318.6 366 318.6 367 318.6 367 318.6 368 318.6 368 318.6 369 318.6 369 318.6 370 318.6 370 318.6 371 318.6 371 318.6 372 318.6 372 318.6 373 318.6 373 318.2 374 318.2 374 317.8 375 317.8 375 317.9 376 317.9 376 318.3 377 318.3 377 318.2 378 318.2 378 318.6 379 318.6 379 318.2 380 318.2 380 318.5 381 318.5 381 318.6 382 318.6 382 318.6 383 318.6 383 318.6 384 318.6 384 318.6 385 318.6 385 318.6 386 318.6 386 318.6 387 318.6 387 318.6 388 318.6 388 318.6 389 318.6 389 318.6 390 318.6 390 318.6 391 318.6 391 318.6 392 318.6 392 318.6 393 318.6 393 318.6 394 318.6 394 318.6 395 318.6 395 318.6 396 318.6 396 318.6 397 318.6 397 318.6 398 318.6 398 318.6 399 318.6 399 318.6 400 318.6 400 318.6 401 318.6 401 318.6 402 318.6 402 318.6 403 318.6 403 318.6 404 318.6 404 318.6 405 318.6 405 318.6 406 318.6 406 318.6 407 318.6 407 318.6 408 318.6 408 318.6 409 318.6 409 318.6 410 318.6 410 318.6 411 318.6 411 318.6 412 318.6 412 318.6 413 318.6 413 318.6 414 318.6 414 318.6 415 318.6 415 318.6 416 318.6 416 318.6 417 318.6 417 318.6 418 318.6 418 318.6 419 318.6 419 318.6 420 318.6 420 318.6 421 318.6 421 318.6 422 318.6 422 318.6 423 318.6 423 318.6 424 318.6 424 318.6 425 318.6 425 318.6 426 318.6 426 318.6 427 318.6 427 318.6 428 318.6 428 318.6 429 318.6 429 318.6 430 318.6 430 318.6 431 318.6 431 318.6 432 318.6 432 318.6 433 318.6 433 318.6 434 318.6 434 318.6 435 318.6 435 318.6 436 318.6 436 318.6 437 318.6 437 318.6 438 318.6 438 318.6 439 318.6 439 318.6 440 318.6 440 318.6 441 318.6 441 318.6 442 318.6 442 318.6 443 318.6 443 318.6 444 318.6 444 318.6 445 318.6 445 318.5 446 318.5 446 318.6 447 318.6 447 318.6 448 318.6 448 318.6 449 318.6 449 318.6 450 318.6 450 318.6 451 318.6 451 318.6 452 318.6 452 318.6 453 318.6 453 318.6 454 318.6 454 318.6 455 318.6 455 318.6 456 318.6 456 318.6 457 318.6 457 318.6 458 318.6 458 318.6 459 318.6 459 318.6 460 318.6 460 318.6 461 318.6 461 318.6 462 318.6 462 318.6 463 318.6 463 318.6 464 318.6 464 318.6 465 318.6 465 318.6 466 318.6 466 318.6 467 318.6 467 318.6 468 318.6 468 318.6 469 318.6 469 318.6 470 318.6 470 318.6 471 318.6 471 318.6 472 318.6 472 318.6 473 318.6 473 318.6 474 318.6 474 318.5 475 318.5 475 318.3 476 318.3 476 317.6 477 317.6 477 317.7 478 317.7 478 317.7 479 317.7 479 318.4 480 318.4 480 318.6 481 318.6 481 318.6 482 318.6 482 318.6 483 318.6 483 318.6 484 318.6 484 318.6 485 318.6 485 318.6 486 318.6 486 318.6 487 318.6 487 318.6 488 318.6 488 318.6 489 318.6 489 318.6 490 318.6 490 318.6 491 318.6 491 318.6 492 318.6 492 318.6 493 318.6 493 318.6 494 318.6 494 318.6 495 318.6 495 318.6 496 318.6 496 318.6 497 318.6 497 318.6 498 318.6 498 318.6 499 318.6 499 318.6 500 318.6 500 318.6 501 318.6 501 318.6 502 318.6 502 318.6 503 318.6 503 318.6 504 318.6 504 318.6 505 318.6 505 318.6 506 318.6 506 318.6 507 318.6 507 318.6 508 318.6 508 318.6 509 318.6 509 318.6 510 318.6 510 318.6 511 318.6 511 318.6 512 318.6 512 318.6 513 318.6 513 318.6 514 318.6 514 318.6 515 318.6 515 318.6 516 318.6 516 318.6 517 318.6 517 318.6 518 318.6 518 318.6 519 318.6 519 318.5 520 318.5 520 318.3 521 318.3 521 318.3 522 318.3 522 318.0 523 318.0 523 318.0 524 318.0 524 317.9 525 317.9 525 317.9 526 317.9 526 318.6 527 318.6 527 318.6 528 318.6 528 318.6 529 318.6 529 318.6 530 318.6 530 318.6 531 318.6 531 318.6 532 318.6 532 318.6 533 318.6 533 318.6 534 318.6 534 318.6 535 318.6 535 318.6 536 318.6 536 318.6 537 318.6 537 318.6 538 318.6 538 318.6 539 318.6 539 318.6 540 318.6 540 318.6 541 318.6 541 318.6 542 318.6 542 318.6 543 318.6 543 318.6 544 318.6 544 318.6 545 318.6 545 318.6 546 318.6 546 318.6 547 318.6 547 318.6 548 318.6 548 318.6 549 318.6 549 318.6 550 318.6 550 318.6 551 318.6 551 318.6 552 318.6 552 318.6 553 318.6 553 318.6 554 318.6 554 318.6 555 318.6 555 318.6 556 318.6 556 318.6 557 318.6 557 318.6 558 318.6 558 318.6 559 318.6 559 318.6 560 318.6 560 318.6 561 318.6 561 318.6 562 318.6 562 318.6 563 318.6 563 318.6 564 318.6 564 318.6 565 318.6 565 318.6 566 318.6 566 318.6 567 318.6 567 318.6 568 318.6 568 318.6 569 318.6 569 318.6 570 318.6 570 318.6 571 318.6 571 318.6 572 318.6 572 318.6 573 318.6 573 318.6 574 318.6 574 318.6 575 318.6 575 318.6 576 318.6 576 318.6 577 318.6 577 318.6 578 318.6 578 318.6 579 318.6 579 318.6 580 318.6 580 318.6 581 318.6 581 318.5 582 318.5 582 318.3 583 318.3 583 318.1 584 318.1 584 318.1 585 318.1 585 317.9 586 317.9 586 317.5 587 317.5 587 318.6 588 318.6 588 318.0 589 318.0 589 317.8 590 317.8 590 317.9 591 317.9 591 317.8 592 317.8 592 318.3 593 318.3 593 318.6 594 318.6 594 318.6 595 318.6 595 318.6 596 318.6 596 318.6 597 318.6 597 318.6 598 318.6 598 318.6 599 318.6 599 318.6 600 318.6 600 318.6 601 318.6 601 318.6 602 318.6 602 318.6 603 318.6 603 318.6 604 318.6 604 318.6 605 318.6 605 318.6 606 318.6 606 320.4 605 320.4 605 320.4 604 320.4 604 320.4 603 320.4 603 320.4 602 320.4 602 320.4 601 320.4 601 320.4 600 320.4 600 320.4 599 320.4 599 320.4 598 320.4 598 320.4 597 320.4 597 320.4 596 320.4 596 320.4 595 320.4 595 320.4 594 320.4 594 320.5 593 320.5 593 320.8 592 320.8 592 321.0 591 321.0 591 321.0 590 321.0 590 321.3 589 321.3 589 321.3 588 321.3 588 320.4 587 320.4 587 321.8 586 321.8 586 320.8 585 320.8 585 321.1 584 321.1 584 321.1 583 321.1 583 320.8 582 320.8 582 320.5 581 320.5 581 320.4 580 320.4 580 320.4 579 320.4 579 320.4 578 320.4 578 320.4 577 320.4 577 320.4 576 320.4 576 320.4 575 320.4 575 320.4 574 320.4 574 320.4 573 320.4 573 320.4 572 320.4 572 320.4 571 320.4 571 320.4 570 320.4 570 320.4 569 320.4 569 320.4 568 320.4 568 320.4 567 320.4 567 320.4 566 320.4 566 320.4 565 320.4 565 320.4 564 320.4 564 320.4 563 320.4 563 320.4 562 320.4 562 320.4 561 320.4 561 320.4 560 320.4 560 320.4 559 320.4 559 320.4 558 320.4 558 320.4 557 320.4 557 320.4 556 320.4 556 320.4 555 320.4 555 320.4 554 320.4 554 320.4 553 320.4 553 320.4 552 320.4 552 320.4 551 320.4 551 320.4 550 320.4 550 320.4 549 320.4 549 320.4 548 320.4 548 320.4 547 320.4 547 320.4 546 320.4 546 320.4 545 320.4 545 320.4 544 320.4 544 320.4 543 320.4 543 320.4 542 320.4 542 320.4 541 320.4 541 320.4 540 320.4 540 320.4 539 320.4 539 320.4 538 320.4 538 320.4 537 320.4 537 320.4 536 320.4 536 320.4 535 320.4 535 320.4 534 320.4 534 320.4 533 320.4 533 320.4 532 320.4 532 320.4 531 320.4 531 320.4 530 320.4 530 320.4 529 320.4 529 320.4 528 320.4 528 320.4 527 320.4 527 320.4 526 320.4 526 321.0 525 321.0 525 321.0 524 321.0 524 320.8 523 320.8 523 320.8 522 320.8 522 320.9 521 320.9 521 320.9 520 320.9 520 320.7 519 320.7 519 320.4 518 320.4 518 320.4 517 320.4 517 320.4 516 320.4 516 320.4 515 320.4 515 320.4 514 320.4 514 320.4 513 320.4 513 320.4 512 320.4 512 320.4 511 320.4 511 320.4 510 320.4 510 320.4 509 320.4 509 320.4 508 320.4 508 320.4 507 320.4 507 320.4 506 320.4 506 320.4 505 320.4 505 320.4 504 320.4 504 320.4 503 320.4 503 320.4 502 320.4 502 320.4 501 320.4 501 320.4 500 320.4 500 320.4 499 320.4 499 320.4 498 320.4 498 320.4 497 320.4 497 320.4 496 320.4 496 320.4 495 320.4 495 320.4 494 320.4 494 320.4 493 320.4 493 320.4 492 320.4 492 320.4 491 320.4 491 320.4 490 320.4 490 320.4 489 320.4 489 320.4 488 320.4 488 320.4 487 320.4 487 320.4 486 320.4 486 320.4 485 320.4 485 320.4 484 320.4 484 320.4 483 320.4 483 320.4 482 320.4 482 320.4 481 320.4 481 320.4 480 320.4 480 320.8 479 320.8 479 321.4 478 321.4 478 321.5 477 321.5 477 321.6 476 321.6 476 320.5 475 320.5 475 320.4 474 320.4 474 320.4 473 320.4 473 320.4 472 320.4 472 320.4 471 320.4 471 320.4 470 320.4 470 320.4 469 320.4 469 320.4 468 320.4 468 320.4 467 320.4 467 320.4 466 320.4 466 320.4 465 320.4 465 320.4 464 320.4 464 320.4 463 320.4 463 320.4 462 320.4 462 320.4 461 320.4 461 320.4 460 320.4 460 320.4 459 320.4 459 320.4 458 320.4 458 320.4 457 320.4 457 320.4 456 320.4 456 320.4 455 320.4 455 320.4 454 320.4 454 320.4 453 320.4 453 320.4 452 320.4 452 320.4 451 320.4 451 320.4 450 320.4 450 320.4 449 320.4 449 320.4 448 320.4 448 320.4 447 320.4 447 320.4 446 320.4 446 320.5 445 320.5 445 320.4 444 320.4 444 320.4 443 320.4 443 320.4 442 320.4 442 320.4 441 320.4 441 320.4 440 320.4 440 320.4 439 320.4 439 320.4 438 320.4 438 320.4 437 320.4 437 320.4 436 320.4 436 320.4 435 320.4 435 320.4 434 320.4 434 320.4 433 320.4 433 320.4 432 320.4 432 320.4 431 320.4 431 320.4 430 320.4 430 320.4 429 320.4 429 320.4 428 320.4 428 320.4 427 320.4 427 320.4 426 320.4 426 320.4 425 320.4 425 320.4 424 320.4 424 320.4 423 320.4 423 320.4 422 320.4 422 320.4 421 320.4 421 320.4 420 320.4 420 320.4 419 320.4 419 320.4 418 320.4 418 320.4 417 320.4 417 320.4 416 320.4 416 320.4 415 320.4 415 320.4 414 320.4 414 320.4 413 320.4 413 320.4 412 320.4 412 320.4 411 320.4 411 320.4 410 320.4 410 320.4 409 320.4 409 320.4 408 320.4 408 320.4 407 320.4 407 320.4 406 320.4 406 320.4 405 320.4 405 320.4 404 320.4 404 320.4 403 320.4 403 320.4 402 320.4 402 320.4 401 320.4 401 320.4 400 320.4 400 320.4 399 320.4 399 320.4 398 320.4 398 320.4 397 320.4 397 320.4 396 320.4 396 320.4 395 320.4 395 320.4 394 320.4 394 320.4 393 320.4 393 320.4 392 320.4 392 320.4 391 320.4 391 320.4 390 320.4 390 320.4 389 320.4 389 320.4 388 320.4 388 320.4 387 320.4 387 320.4 386 320.4 386 320.4 385 320.4 385 320.4 384 320.4 384 320.4 383 320.4 383 320.4 382 320.4 382 320.4 381 320.4 381 320.4 380 320.4 380 320.6 379 320.6 379 320.4 378 320.4 378 320.7 377 320.7 377 320.8 376 320.8 376 321.2 375 321.2 375 321.3 374 321.3 374 320.8 373 320.8 373 320.4 372 320.4 372 320.4 371 320.4 371 320.4 370 320.4 370 320.4 369 320.4 369 320.4 368 320.4 368 320.4 367 320.4 367 320.4 366 320.4 366 320.4 365 320.4 365 320.4 364 320.4 364 320.4 363 320.4 363 320.4 362 320.4 362 320.4 361 320.4 361 320.4 360 320.4 360 320.4 359 320.4 359 320.4 358 320.4 358 320.4 357 320.4 357 320.4 356 320.4 356 320.4 355 320.4 355 320.4 354 320.4 354 320.4 353 320.4 353 320.4 352 320.4 352 320.4 351 320.4 351 320.4 350 320.4 350 320.4 349 320.4 349 320.4 348 320.4 348 320.4 347 320.4 347 320.4 346 320.4 346 320.9 345 320.9 345 320.8 344 320.8 344 320.9 343 320.9 343 320.6 342 320.6 342 320.7 341 320.7 341 320.4 340 320.4 340 320.4 339 320.4 339 320.4 338 320.4 338 320.4 337 320.4 337 320.4 336 320.4 336 320.4 335 320.4 335 320.4 334 320.4 334 320.4 333 320.4 333 320.4 332 320.4 332 320.4 331 320.4 331 320.4 330 320.4 330 320.4 329 320.4 329 320.4 328 320.4 328 320.4 327 320.4 327 320.4 326 320.4 326 320.4 325 320.4 325 320.4 324 320.4 324 320.4 323 320.4 323 320.4 322 320.4 322 320.4 321 320.4 321 320.4 320 320.4 320 320.4 319 320.4 319 320.5 318 320.5 318 320.5 317 320.5 317 320.4 316 320.4 316 320.4 315 320.4 315 320.4 314 320.4 314 320.4 313 320.4 313 320.4 312 320.4 312 320.4 311 320.4 311 320.4 310 320.4 310 320.4 309 320.4 309 320.4 308 320.4 308 320.4 307 320.4 307 320.4 306 320.4 306 320.4 305 320.4 305 320.4 304 320.4 304 320.4 303 320.4 303 320.4 302 320.4 302 320.4 301 320.4 301 320.4 300 320.4 300 320.4 299 320.4 299 320.4 298 320.4 298 320.4 297 320.4 297 320.4 296 320.4 296 320.4 295 320.4 295 320.4 294 320.4 294 320.4 293 320.4 293 320.4 292 320.4 292 320.4 291 320.4 291 320.4 290 320.4 290 320.4 289 320.4 289 320.4 288 320.4 288 320.4 287 320.4 287 320.4 286 320.4 286 320.4 285 320.4 285 320.6 284 320.6 284 320.4 283 320.4 283 320.4 282 320.4 282 320.4 281 320.4 281 320.4 280 320.4Z" fill="#8e8e8e"/></svg>
<svg class="a" style="left:331px;top:290px" width="20" height="20"><circle cx="9" cy="9" r="4.5" fill="none" stroke="#c54ae2" stroke-width="1.4"/></svg>
<div class="a" style="left:878px;top:245px;width:80px;height:41px;background:linear-gradient(#3d3d3d,#393939);border:1px solid #1c1c1c;border-radius:5px;overflow:hidden"></div><div class="a" style="left:884px;top:249px;font-size:11.5px;color:#8b7cf2;line-height:14px;letter-spacing:0.4px">BV 1_3</div><svg class="a" style="left:0;top:0" width="935" height="458"><path d="M880 273.6 881 273.6 881 273.6 882 273.6 882 273.6 883 273.6 883 273.6 884 273.6 884 273.6 885 273.6 885 273.6 886 273.6 886 273.6 887 273.6 887 273.6 888 273.6 888 273.6 889 273.6 889 273.6 890 273.6 890 273.6 891 273.6 891 273.6 892 273.6 892 273.6 893 273.6 893 273.6 894 273.6 894 273.6 895 273.6 895 273.6 896 273.6 896 273.6 897 273.6 897 273.6 898 273.6 898 273.6 899 273.6 899 273.6 900 273.6 900 273.6 901 273.6 901 273.6 902 273.6 902 273.6 903 273.6 903 273.6 904 273.6 904 273.6 905 273.6 905 273.6 906 273.6 906 273.6 907 273.6 907 273.1 908 273.1 908 273.1 909 273.1 909 273.1 910 273.1 910 273.4 911 273.4 911 273.6 912 273.6 912 273.6 913 273.6 913 273.6 914 273.6 914 273.4 915 273.4 915 272.9 916 272.9 916 272.9 917 272.9 917 272.9 918 272.9 918 273.6 919 273.6 919 273.6 920 273.6 920 273.6 921 273.6 921 273.6 922 273.6 922 273.6 923 273.6 923 273.6 924 273.6 924 273.6 925 273.6 925 273.6 926 273.6 926 273.6 927 273.6 927 273.6 928 273.6 928 273.4 929 273.4 929 272.6 930 272.6 930 272.5 931 272.5 931 272.5 932 272.5 932 271.0 933 271.0 933 272.6 934 272.6 934 273.0 935 273.0 935 276.2 934 276.2 934 276.0 933 276.0 933 277.3 932 277.3 932 276.3 931 276.3 931 276.3 930 276.3 930 276.2 929 276.2 929 275.5 928 275.5 928 275.4 927 275.4 927 275.4 926 275.4 926 275.4 925 275.4 925 275.4 924 275.4 924 275.4 923 275.4 923 275.4 922 275.4 922 275.4 921 275.4 921 275.4 920 275.4 920 275.4 919 275.4 919 275.4 918 275.4 918 275.9 917 275.9 917 276.0 916 276.0 916 276.0 915 276.0 915 275.8 914 275.8 914 275.4 913 275.4 913 275.4 912 275.4 912 275.4 911 275.4 911 275.5 910 275.5 910 275.7 909 275.7 909 276.0 908 276.0 908 276.0 907 276.0 907 275.5 906 275.5 906 275.4 905 275.4 905 275.4 904 275.4 904 275.4 903 275.4 903 275.4 902 275.4 902 275.4 901 275.4 901 275.4 900 275.4 900 275.4 899 275.4 899 275.4 898 275.4 898 275.4 897 275.4 897 275.4 896 275.4 896 275.4 895 275.4 895 275.4 894 275.4 894 275.4 893 275.4 893 275.4 892 275.4 892 275.4 891 275.4 891 275.4 890 275.4 890 275.4 889 275.4 889 275.4 888 275.4 888 275.4 887 275.4 887 275.4 886 275.4 886 275.4 885 275.4 885 275.4 884 275.4 884 275.4 883 275.4 883 275.4 882 275.4 882 275.4 881 275.4 881 275.4 880 275.4Z" fill="#8e8e8e"/></svg>
<div class="a" style="left:878px;top:288px;width:80px;height:43px;background:linear-gradient(#3d3d3d,#393939);border:1px solid #1c1c1c;border-radius:5px;overflow:hidden"></div><div class="a" style="left:884px;top:292px;font-size:11.5px;color:#c54ae2;line-height:14px;letter-spacing:0.4px">BV 2_3</div><svg class="a" style="left:0;top:0" width="935" height="458"><path d="M880 318.6 881 318.6 881 318.6 882 318.6 882 318.6 883 318.6 883 318.6 884 318.6 884 318.6 885 318.6 885 318.6 886 318.6 886 318.6 887 318.6 887 318.6 888 318.6 888 318.6 889 318.6 889 318.6 890 318.6 890 318.6 891 318.6 891 318.6 892 318.6 892 318.6 893 318.6 893 318.6 894 318.6 894 318.6 895 318.6 895 318.6 896 318.6 896 318.6 897 318.6 897 318.6 898 318.6 898 318.6 899 318.6 899 318.6 900 318.6 900 318.6 901 318.6 901 318.6 902 318.6 902 318.6 903 318.6 903 318.6 904 318.6 904 318.4 905 318.4 905 318.3 906 318.3 906 318.3 907 318.3 907 318.1 908 318.1 908 318.5 909 318.5 909 318.6 910 318.6 910 318.6 911 318.6 911 318.6 912 318.6 912 317.5 913 317.5 913 318.4 914 318.4 914 318.5 915 318.5 915 318.5 916 318.5 916 318.1 917 318.1 917 318.2 918 318.2 918 318.4 919 318.4 919 318.6 920 318.6 920 318.6 921 318.6 921 318.6 922 318.6 922 318.6 923 318.6 923 318.6 924 318.6 924 318.3 925 318.3 925 317.6 926 317.6 926 317.1 927 317.1 927 317.7 928 317.7 928 318.5 929 318.5 929 317.6 930 317.6 930 316.0 931 316.0 931 317.5 932 317.5 932 316.8 933 316.8 933 318.4 934 318.4 934 318.6 935 318.6 935 320.4 934 320.4 934 320.5 933 320.5 933 322.4 932 322.4 932 321.5 931 321.5 931 322.3 930 322.3 930 321.0 929 321.0 929 320.4 928 320.4 928 321.3 927 321.3 927 322.2 926 322.2 926 321.8 925 321.8 925 320.9 924 320.9 924 320.4 923 320.4 923 320.4 922 320.4 922 320.4 921 320.4 921 320.4 920 320.4 920 320.4 919 320.4 919 320.6 918 320.6 918 320.7 917 320.7 917 320.7 916 320.7 916 320.6 915 320.6 915 320.6 914 320.6 914 320.6 913 320.6 913 321.7 912 321.7 912 320.4 911 320.4 911 320.4 910 320.4 910 320.4 909 320.4 909 320.6 908 320.6 908 320.7 907 320.7 907 320.9 906 320.9 906 320.9 905 320.9 905 320.7 904 320.7 904 320.4 903 320.4 903 320.4 902 320.4 902 320.4 901 320.4 901 320.4 900 320.4 900 320.4 899 320.4 899 320.4 898 320.4 898 320.4 897 320.4 897 320.4 896 320.4 896 320.4 895 320.4 895 320.4 894 320.4 894 320.4 893 320.4 893 320.4 892 320.4 892 320.4 891 320.4 891 320.4 890 320.4 890 320.4 889 320.4 889 320.4 888 320.4 888 320.4 887 320.4 887 320.4 886 320.4 886 320.4 885 320.4 885 320.4 884 320.4 884 320.4 883 320.4 883 320.4 882 320.4 882 320.4 881 320.4 881 320.4 880 320.4Z" fill="#8e8e8e"/></svg>
<div class="a" style="left:93px;top:333px;width:425px;height:112px;background:#b700bd;border:2px solid #d3a126;border-left:0;border-radius:0 5px 5px 0"></div>
<div class="a" style="left:93px;top:335px;width:60px;height:18px;overflow:hidden"><div class="a" style="left:-4px;top:1.5px;font-size:12px;color:#f8dcf8;line-height:16px;letter-spacing:0.1px;-webkit-text-stroke:0.25px #f8dcf8;white-space:nowrap">n Chorus_1</div></div>
<svg class="a" style="left:157px;top:335px" width="20" height="20"><circle cx="10" cy="9.7" r="4.5" fill="none" stroke="#fff" stroke-width="1.4"/></svg>
<svg class="a" style="left:0;top:0" width="935" height="458"><path d="M93 398.4 94 398.4 94 398.4 95 398.4 95 398.4 96 398.4 96 398.4 97 398.4 97 398.4 98 398.4 98 398.4 99 398.4 99 398.4 100 398.4 100 392.4 101 392.4 101 388.2 102 388.2 102 390.1 103 390.1 103 390.3 104 390.3 104 390.4 105 390.4 105 386.1 106 386.1 106 392.7 107 392.7 107 393.7 108 393.7 108 393.8 109 393.8 109 391.0 110 391.0 110 386.0 111 386.0 111 395.0 112 395.0 112 391.6 113 391.6 113 391.8 114 391.8 114 387.5 115 387.5 115 387.7 116 387.7 116 391.8 117 391.8 117 392.2 118 392.2 118 390.5 119 390.5 119 388.0 120 388.0 120 388.2 121 388.2 121 389.6 122 389.6 122 395.0 123 395.0 123 395.0 124 395.0 124 390.6 125 390.6 125 391.2 126 391.2 126 393.9 127 393.9 127 395.9 128 395.9 128 398.4 129 398.4 129 395.0 130 395.0 130 392.4 131 392.4 131 392.4 132 392.4 132 389.3 133 389.3 133 389.7 134 389.7 134 390.1 135 390.1 135 391.4 136 391.4 136 392.6 137 392.6 137 393.0 138 393.0 138 395.4 139 395.4 139 398.4 140 398.4 140 398.4 141 398.4 141 391.5 142 391.5 142 385.4 143 385.4 143 385.3 144 385.3 144 386.4 145 386.4 145 391.7 146 391.7 146 387.9 147 387.9 147 388.2 148 388.2 148 392.8 149 392.8 149 391.6 150 391.6 150 391.8 151 391.8 151 392.1 152 392.1 152 392.7 153 392.7 153 395.1 154 395.1 154 395.4 155 395.4 155 395.1 156 395.1 156 396.4 157 396.4 157 398.4 158 398.4 158 398.4 159 398.4 159 398.4 160 398.4 160 394.5 161 394.5 161 391.7 162 391.7 162 393.6 163 393.6 163 389.2 164 389.2 164 389.4 165 389.4 165 390.7 166 390.7 166 390.9 167 390.9 167 391.1 168 391.1 168 391.8 169 391.8 169 393.3 170 393.3 170 391.6 171 391.6 171 390.7 172 390.7 172 390.9 173 390.9 173 392.4 174 392.4 174 391.4 175 391.4 175 393.6 176 393.6 176 391.9 177 391.9 177 392.4 178 392.4 178 393.8 179 393.8 179 396.6 180 396.6 180 398.4 181 398.4 181 397.6 182 397.6 182 396.8 183 396.8 183 396.2 184 396.2 184 396.4 185 396.4 185 396.3 186 396.3 186 396.4 187 396.4 187 396.7 188 396.7 188 398.2 189 398.2 189 398.0 190 398.0 190 398.4 191 398.4 191 398.4 192 398.4 192 398.4 193 398.4 193 391.1 194 391.1 194 386.3 195 386.3 195 385.3 196 385.3 196 384.8 197 384.8 197 390.1 198 390.1 198 390.6 199 390.6 199 390.8 200 390.8 200 391.0 201 391.0 201 386.8 202 386.8 202 388.8 203 388.8 203 389.1 204 389.1 204 388.9 205 388.9 205 380.6 206 380.6 206 388.9 207 388.9 207 387.8 208 387.8 208 388.1 209 388.1 209 389.2 210 389.2 210 392.0 211 392.0 211 396.2 212 396.2 212 398.4 213 398.4 213 398.4 214 398.4 214 398.4 215 398.4 215 398.4 216 398.4 216 398.4 217 398.4 217 398.4 218 398.4 218 398.4 219 398.4 219 398.4 220 398.4 220 395.0 221 395.0 221 392.2 222 392.2 222 388.6 223 388.6 223 391.5 224 391.5 224 391.6 225 391.6 225 390.4 226 390.4 226 390.6 227 390.6 227 388.3 228 388.3 228 387.5 229 387.5 229 389.3 230 389.3 230 389.5 231 389.5 231 394.1 232 394.1 232 394.2 233 394.2 233 394.3 234 394.3 234 392.5 235 392.5 235 392.6 236 392.6 236 392.3 237 392.3 237 391.3 238 391.3 238 392.7 239 392.7 239 392.8 240 392.8 240 390.3 241 390.3 241 392.4 242 392.4 242 392.5 243 392.5 243 386.7 244 386.7 244 391.9 245 391.9 245 392.3 246 392.3 246 392.4 247 392.4 247 392.9 248 392.9 248 395.3 249 395.3 249 396.7 250 396.7 250 398.4 251 398.4 251 398.4 252 398.4 252 398.4 253 398.4 253 398.4 254 398.4 254 398.4 255 398.4 255 398.4 256 398.4 256 398.4 257 398.4 257 398.4 258 398.4 258 398.4 259 398.4 259 398.4 260 398.4 260 398.4 261 398.4 261 398.4 262 398.4 262 398.4 263 398.4 263 398.4 264 398.4 264 398.4 265 398.4 265 398.4 266 398.4 266 398.4 267 398.4 267 398.4 268 398.4 268 398.4 269 398.4 269 398.4 270 398.4 270 398.4 271 398.4 271 398.4 272 398.4 272 398.4 273 398.4 273 398.4 274 398.4 274 398.4 275 398.4 275 398.4 276 398.4 276 398.4 277 398.4 277 398.4 278 398.4 278 398.4 279 398.4 279 398.4 280 398.4 280 398.4 281 398.4 281 398.4 282 398.4 282 398.4 283 398.4 283 398.4 284 398.4 284 398.4 285 398.4 285 396.0 286 396.0 286 393.8 287 393.8 287 391.5 288 391.5 288 391.2 289 391.2 289 391.4 290 391.4 290 391.6 291 391.6 291 392.5 292 392.5 292 392.7 293 392.7 293 393.0 294 393.0 294 394.1 295 394.1 295 394.3 296 394.3 296 392.9 297 392.9 297 393.1 298 393.1 298 394.4 299 394.4 299 396.0 300 396.0 300 396.9 301 396.9 301 397.7 302 397.7 302 398.4 303 398.4 303 398.4 304 398.4 304 398.4 305 398.4 305 398.4 306 398.4 306 398.4 307 398.4 307 398.4 308 398.4 308 398.4 309 398.4 309 398.4 310 398.4 310 398.4 311 398.4 311 395.9 312 395.9 312 396.4 313 396.4 313 391.7 314 391.7 314 393.1 315 393.1 315 393.2 316 393.2 316 396.5 317 396.5 317 396.6 318 396.6 318 394.2 319 394.2 319 395.2 320 395.2 320 394.0 321 394.0 321 396.0 322 396.0 322 396.1 323 396.1 323 395.3 324 395.3 324 396.3 325 396.3 325 396.4 326 396.4 326 392.4 327 392.4 327 387.0 328 387.0 328 392.4 329 392.4 329 397.1 330 397.1 330 396.8 331 396.8 331 398.4 332 398.4 332 398.4 333 398.4 333 398.4 334 398.4 334 398.4 335 398.4 335 398.4 336 398.4 336 397.4 337 397.4 337 392.9 338 392.9 338 389.9 339 389.9 339 393.7 340 393.7 340 390.4 341 390.4 341 390.4 342 390.4 342 390.5 343 390.5 343 390.9 344 390.9 344 391.0 345 391.0 345 391.1 346 391.1 346 393.4 347 393.4 347 393.4 348 393.4 348 392.9 349 392.9 349 393.0 350 393.0 350 391.9 351 391.9 351 396.0 352 396.0 352 396.0 353 396.0 353 389.3 354 389.3 354 392.1 355 392.1 355 393.1 356 393.1 356 391.6 357 391.6 357 392.4 358 392.4 358 391.4 359 391.4 359 391.9 360 391.9 360 392.0 361 392.0 361 392.1 362 392.1 362 393.9 363 393.9 363 393.7 364 393.7 364 395.2 365 395.2 365 394.9 366 394.9 366 394.9 367 394.9 367 390.3 368 390.3 368 390.4 369 390.4 369 394.1 370 394.1 370 392.7 371 392.7 371 394.4 372 394.4 372 394.4 373 394.4 373 394.0 374 394.0 374 391.2 375 391.2 375 396.9 376 396.9 376 393.3 377 393.3 377 393.3 378 393.3 378 393.4 379 393.4 379 394.8 380 394.8 380 391.3 381 391.3 381 392.7 382 392.7 382 392.7 383 392.7 383 396.1 384 396.1 384 395.3 385 395.3 385 395.4 386 395.4 386 395.4 387 395.4 387 394.6 388 394.6 388 394.7 389 394.7 389 394.7 390 394.7 390 394.6 391 394.6 391 397.3 392 397.3 392 397.8 393 397.8 393 397.4 394 397.4 394 398.4 395 398.4 395 398.4 396 398.4 396 398.4 397 398.4 397 398.4 398 398.4 398 398.4 399 398.4 399 398.4 400 398.4 400 398.4 401 398.4 401 398.4 402 398.4 402 398.4 403 398.4 403 397.2 404 397.2 404 393.4 405 393.4 405 393.7 406 393.7 406 392.4 407 392.4 407 392.6 408 392.6 408 390.6 409 390.6 409 392.2 410 392.2 410 393.9 411 393.9 411 392.7 412 392.7 412 392.9 413 392.9 413 394.5 414 394.5 414 391.3 415 391.3 415 391.5 416 391.5 416 393.5 417 393.5 417 393.7 418 393.7 418 393.8 419 393.8 419 396.7 420 396.7 420 394.1 421 394.1 421 397.7 422 397.7 422 398.4 423 398.4 423 398.4 424 398.4 424 398.4 425 398.4 425 398.4 426 398.4 426 398.4 427 398.4 427 398.4 428 398.4 428 398.4 429 398.4 429 398.4 430 398.4 430 396.7 431 396.7 431 392.8 432 392.8 432 388.9 433 388.9 433 392.3 434 392.3 434 392.4 435 392.4 435 393.1 436 393.1 436 393.2 437 393.2 437 393.0 438 393.0 438 393.1 439 393.1 439 393.2 440 393.2 440 393.6 441 393.6 441 392.9 442 392.9 442 393.0 443 393.0 443 393.1 444 393.1 444 393.1 445 393.1 445 393.5 446 393.5 446 394.9 447 394.9 447 395.0 448 395.0 448 396.8 449 396.8 449 395.3 450 395.3 450 395.4 451 395.4 451 394.3 452 394.3 452 394.2 453 394.2 453 395.6 454 395.6 454 396.8 455 396.8 455 398.4 456 398.4 456 396.4 457 396.4 457 395.7 458 395.7 458 390.6 459 390.6 459 391.8 460 391.8 460 391.4 461 391.4 461 392.5 462 392.5 462 392.5 463 392.5 463 390.2 464 390.2 464 392.3 465 392.3 465 393.4 466 393.4 466 390.5 467 390.5 467 390.6 468 390.6 468 392.7 469 392.7 469 395.7 470 395.7 470 395.7 471 395.7 471 392.8 472 392.8 472 392.8 473 392.8 473 392.9 474 392.9 474 394.3 475 394.3 475 394.4 476 394.4 476 391.0 477 391.0 477 391.1 478 391.1 478 393.5 479 393.5 479 393.1 480 393.1 480 393.1 481 393.1 481 392.0 482 392.0 482 394.6 483 394.6 483 394.7 484 394.7 484 395.2 485 395.2 485 392.8 486 392.8 486 392.8 487 392.8 487 393.9 488 393.9 488 393.9 489 393.9 489 392.4 490 392.4 490 392.0 491 392.0 491 394.3 492 394.3 492 393.9 493 393.9 493 393.3 494 393.3 494 393.3 495 393.3 495 392.8 496 392.8 496 392.9 497 392.9 497 395.2 498 395.2 498 396.4 499 396.4 499 396.6 500 396.6 500 396.6 501 396.6 501 393.4 502 393.4 502 393.5 503 393.5 503 396.1 504 396.1 504 394.5 505 394.5 505 394.4 506 394.4 506 396.8 507 396.8 507 396.8 508 396.8 508 396.8 509 396.8 509 393.9 510 393.9 510 395.0 511 395.0 511 395.0 512 395.0 512 395.7 513 395.7 513 395.9 514 395.9 514 396.7 515 396.7 515 397.6 516 397.6 516 400.1 515 400.1 515 401.1 514 401.1 514 401.8 513 401.8 513 402.0 512 402.0 512 402.9 511 402.9 511 403.0 510 403.0 510 403.9 509 403.9 509 400.7 508 400.7 508 400.7 507 400.7 507 400.7 506 400.7 506 403.5 505 403.5 505 403.7 504 403.7 504 401.1 503 401.1 503 403.0 502 403.0 502 403.1 501 403.1 501 401.2 500 401.2 500 401.2 499 401.2 499 401.4 498 401.4 498 402.0 497 402.0 497 404.2 496 404.2 496 404.3 495 404.3 495 403.9 494 403.9 494 403.9 493 403.9 493 403.8 492 403.8 492 402.7 491 402.7 491 406.3 490 406.3 490 404.4 489 404.4 489 404.3 488 404.3 488 404.4 487 404.4 487 403.6 486 403.6 486 403.6 485 403.6 485 402.9 484 402.9 484 403.1 483 403.1 483 403.1 482 403.1 482 406.3 481 406.3 481 404.1 480 404.1 480 404.2 479 404.2 479 404.5 478 404.5 478 404.8 477 404.8 477 404.9 476 404.9 476 402.3 475 402.3 475 402.3 474 402.3 474 405.0 473 405.0 473 405.0 472 405.0 472 405.1 471 405.1 471 401.3 470 401.3 470 401.4 469 401.4 469 405.0 468 405.0 468 405.4 467 405.4 467 405.4 466 405.4 466 404.7 465 404.7 465 405.3 464 405.3 464 406.2 463 406.2 463 405.4 462 405.4 462 405.5 461 405.5 461 404.4 460 404.4 460 405.5 459 405.5 459 407.3 458 407.3 458 402.2 457 402.2 457 401.3 456 401.3 456 399.6 455 399.6 455 401.2 454 401.2 454 402.5 453 402.5 453 403.9 452 403.9 452 404.8 451 404.8 451 403.1 450 403.1 450 403.2 449 403.2 449 401.0 448 401.0 448 402.9 447 402.9 447 402.9 446 402.9 446 403.5 445 403.5 445 405.9 444 405.9 444 405.0 443 405.0 443 405.1 442 405.1 442 405.2 441 405.2 441 404.4 440 404.4 440 404.9 439 404.9 439 405.0 438 405.0 438 405.1 437 405.1 437 406.0 436 406.0 436 406.1 435 406.1 435 406.1 434 406.1 434 406.2 433 406.2 433 410.8 432 410.8 432 404.6 431 404.6 431 401.5 430 401.5 430 399.6 429 399.6 429 399.6 428 399.6 428 399.6 427 399.6 427 399.6 426 399.6 426 399.6 425 399.6 425 399.6 424 399.6 424 399.6 423 399.6 423 399.6 422 399.6 422 400.3 421 400.3 421 403.2 420 403.2 420 400.8 419 400.8 419 402.6 418 402.6 418 402.7 417 402.7 417 402.8 416 402.8 416 404.3 415 404.3 415 404.5 414 404.5 414 403.4 413 403.4 413 403.2 412 403.2 412 403.3 411 403.3 411 404.0 410 404.0 410 405.3 409 405.3 409 405.5 408 405.5 408 404.4 407 404.4 407 404.5 406 404.5 406 404.0 405 404.0 405 403.0 404 403.0 404 400.7 403 400.7 403 399.6 402 399.6 402 399.6 401 399.6 401 399.6 400 399.6 400 399.6 399 399.6 399 399.6 398 399.6 398 399.6 397 399.6 397 399.6 396 399.6 396 399.6 395 399.6 395 399.6 394 399.6 394 400.3 393 400.3 393 400.2 392 400.2 392 400.6 391 400.6 391 402.7 390 402.7 390 402.7 389 402.7 389 402.7 388 402.7 388 402.8 387 402.8 387 402.3 386 402.3 386 402.6 385 402.6 385 402.6 384 402.6 384 401.4 383 401.4 383 403.5 382 403.5 382 405.3 381 405.3 381 404.6 380 404.6 380 402.1 379 402.1 379 403.1 378 403.1 378 403.2 377 403.2 377 403.2 376 403.2 376 401.1 375 401.1 375 406.6 374 406.6 374 403.2 373 403.2 373 402.5 372 402.5 372 402.5 371 402.5 371 405.0 370 405.0 370 403.7 369 403.7 369 405.3 368 405.3 368 405.4 367 405.4 367 401.9 366 401.9 366 402.0 365 402.0 365 402.1 364 402.1 364 403.6 363 403.6 363 403.1 362 403.1 362 405.1 361 405.1 361 405.1 360 405.1 360 405.2 359 405.2 359 406.5 358 406.5 358 405.7 357 405.7 357 405.9 356 405.9 356 404.0 355 404.0 355 404.9 354 404.9 354 406.0 353 406.0 353 401.1 352 401.1 352 401.2 351 401.2 351 404.1 350 404.1 350 405.0 349 405.0 349 405.0 348 405.0 348 403.7 347 403.7 347 403.7 346 403.7 346 405.5 345 405.5 345 406.6 344 406.6 344 406.7 343 406.7 343 407.9 342 407.9 342 408.0 341 408.0 341 408.0 340 408.0 340 403.5 339 403.5 339 407.8 338 407.8 338 405.4 337 405.4 337 400.4 336 400.4 336 399.6 335 399.6 335 399.6 334 399.6 334 399.6 333 399.6 333 399.6 332 399.6 332 399.6 331 399.6 331 401.9 330 401.9 330 401.2 329 401.2 329 405.1 328 405.1 328 410.0 327 410.0 327 405.1 326 405.1 326 402.7 325 402.7 325 402.8 324 402.8 324 403.3 323 403.3 323 402.8 322 402.8 322 402.9 321 402.9 321 405.6 320 405.6 320 404.7 319 404.7 319 405.3 318 405.3 318 402.2 317 402.2 317 402.3 316 402.3 316 405.0 315 405.0 315 405.2 314 405.2 314 408.5 313 408.5 313 402.1 312 402.1 312 402.6 311 402.6 311 399.6 310 399.6 310 399.6 309 399.6 309 399.6 308 399.6 308 399.6 307 399.6 307 399.6 306 399.6 306 399.6 305 399.6 305 399.6 304 399.6 304 399.6 303 399.6 303 399.6 302 399.6 302 400.2 301 400.2 301 401.0 300 401.0 300 401.8 299 401.8 299 402.1 298 402.1 298 403.7 297 403.7 297 403.9 296 403.9 296 403.3 295 403.3 295 403.4 294 403.4 294 403.0 293 403.0 293 403.8 292 403.8 292 404.0 291 404.0 291 404.3 290 404.3 290 404.4 289 404.4 289 404.5 288 404.5 288 404.6 287 404.6 287 403.0 286 403.0 286 401.2 285 401.2 285 399.6 284 399.6 284 399.6 283 399.6 283 399.6 282 399.6 282 399.6 281 399.6 281 399.6 280 399.6 280 399.6 279 399.6 279 399.6 278 399.6 278 399.6 277 399.6 277 399.6 276 399.6 276 399.6 275 399.6 275 399.6 274 399.6 274 399.6 273 399.6 273 399.6 272 399.6 272 399.6 271 399.6 271 399.6 270 399.6 270 399.6 269 399.6 269 399.6 268 399.6 268 399.6 267 399.6 267 399.6 266 399.6 266 399.6 265 399.6 265 399.6 264 399.6 264 399.6 263 399.6 263 399.6 262 399.6 262 399.6 261 399.6 261 399.6 260 399.6 260 399.6 259 399.6 259 399.6 258 399.6 258 399.6 257 399.6 257 399.6 256 399.6 256 399.6 255 399.6 255 399.6 254 399.6 254 399.6 253 399.6 253 399.6 252 399.6 252 399.6 251 399.6 251 399.6 250 399.6 250 401.9 249 401.9 249 403.6 248 403.6 248 406.2 247 406.2 247 406.7 246 406.7 246 406.9 245 406.9 245 405.2 244 405.2 244 413.5 243 413.5 243 406.3 242 406.3 242 404.9 241 404.9 241 408.6 240 408.6 240 406.8 239 406.8 239 407.0 238 407.0 238 407.3 237 407.3 237 407.0 236 407.0 236 406.7 235 406.7 235 406.9 234 406.9 234 404.1 233 404.1 233 404.2 232 404.2 232 404.3 231 404.3 231 408.5 230 408.5 230 408.7 229 408.7 229 409.1 228 409.1 228 412.9 227 412.9 227 407.5 226 407.5 226 407.6 225 407.6 225 408.4 224 408.4 224 408.5 223 408.5 223 410.3 222 410.3 222 406.0 221 406.0 221 403.5 220 403.5 220 399.6 219 399.6 219 399.6 218 399.6 218 399.6 217 399.6 217 399.6 216 399.6 216 399.6 215 399.6 215 399.6 214 399.6 214 399.6 213 399.6 213 399.6 212 399.6 212 401.4 211 401.4 211 405.4 210 405.4 210 407.9 209 407.9 209 411.1 208 411.1 208 411.5 207 411.5 207 407.0 206 407.0 206 413.6 205 413.6 205 407.0 204 407.0 204 411.6 203 411.6 203 411.9 202 411.9 202 411.0 201 411.0 201 407.1 200 407.1 200 407.3 199 407.3 199 407.5 198 407.5 198 409.9 197 409.9 197 416.7 196 416.7 196 414.7 195 414.7 195 411.0 194 411.0 194 408.8 193 408.8 193 399.6 192 399.6 192 399.6 191 399.6 191 399.6 190 399.6 190 400.1 189 400.1 189 399.8 188 399.8 188 401.7 187 401.7 187 402.1 186 402.1 186 402.2 185 402.2 185 401.8 184 401.8 184 401.9 183 401.9 183 401.5 182 401.5 182 400.6 181 400.6 181 399.6 180 399.6 180 401.3 179 401.3 179 404.1 178 404.1 178 404.3 177 404.3 177 404.8 176 404.8 176 404.4 175 404.4 175 406.8 174 406.8 174 405.4 173 405.4 173 405.4 172 405.4 172 405.6 171 405.6 171 404.2 170 404.2 170 404.4 169 404.4 169 404.7 168 404.7 168 404.6 167 404.6 167 404.7 166 404.7 166 404.9 165 404.9 165 408.3 164 408.3 164 408.5 163 408.5 163 403.7 162 403.7 162 405.4 161 405.4 161 402.9 160 402.9 160 399.6 159 399.6 159 399.6 158 399.6 158 399.6 157 399.6 157 402.1 156 402.1 156 403.4 155 403.4 155 403.4 154 403.4 154 403.8 153 403.8 153 406.7 152 406.7 152 407.2 151 407.2 151 407.5 150 407.5 150 407.8 149 407.8 149 405.6 148 405.6 148 414.4 147 414.4 147 414.8 146 414.8 146 406.5 145 406.5 145 413.7 144 413.7 144 416.4 143 416.4 143 413.9 142 413.9 142 404.3 141 404.3 141 399.6 140 399.6 140 399.6 139 399.6 139 401.8 138 401.8 138 403.6 137 403.6 137 403.9 136 403.9 136 407.0 135 407.0 135 408.6 134 408.6 134 409.1 133 409.1 133 409.6 132 409.6 132 405.7 131 405.7 131 404.4 130 404.4 130 403.3 129 403.3 129 399.6 128 399.6 128 402.6 127 402.6 127 403.0 126 403.0 126 406.8 125 406.8 125 407.4 124 407.4 124 403.5 123 403.5 123 403.6 122 403.6 122 408.1 121 408.1 121 409.0 120 409.0 120 409.2 119 409.2 119 405.6 118 405.6 118 405.1 117 405.1 117 405.5 116 405.5 116 412.1 115 412.1 115 412.3 114 412.3 114 406.2 113 406.2 113 405.2 112 405.2 112 403.4 111 403.4 111 412.2 110 412.2 110 407.6 109 407.6 109 404.5 108 404.5 108 404.6 107 404.6 107 404.5 106 404.5 106 409.3 105 409.3 105 405.8 104 405.8 104 405.9 103 405.9 103 406.0 102 406.0 102 410.3 101 410.3 101 405.9 100 405.9 100 399.6 99 399.6 99 399.6 98 399.6 98 399.6 97 399.6 97 399.6 96 399.6 96 399.6 95 399.6 95 399.6 94 399.6 94 399.6 93 399.6Z" fill="#fcacfc"/></svg>
<div class="a" style="left:639px;top:334px;width:247px;height:111px;background:#b700bd;border:1.5px solid #f9c704;border-radius:5px;overflow:hidden"><div style="height:19px;background:#fecb08"></div></div>
<div class="a" style="left:645px;top:337px;font-size:12px;color:#2c2810;line-height:16px;letter-spacing:0.32px">Lead Vox High Chorus_2</div>
<svg class="a" style="left:791px;top:335px" width="20" height="20"><circle cx="10" cy="9.7" r="4.5" fill="none" stroke="#2c2810" stroke-width="1.4"/></svg>
<svg class="a" style="left:0;top:0" width="935" height="458"><path d="M641 398.4 642 398.4 642 398.4 643 398.4 643 398.4 644 398.4 644 398.4 645 398.4 645 398.4 646 398.4 646 392.0 647 392.0 647 387.6 648 387.6 648 385.6 649 385.6 649 380.9 650 380.9 650 380.0 651 380.0 651 387.9 652 387.9 652 388.2 653 388.2 653 390.7 654 390.7 654 387.5 655 387.5 655 387.7 656 387.7 656 388.9 657 388.9 657 382.0 658 382.0 658 389.6 659 389.6 659 394.5 660 394.5 660 392.5 661 392.5 661 392.2 662 392.2 662 392.3 663 392.3 663 393.9 664 393.9 664 395.8 665 395.8 665 398.4 666 398.4 666 398.4 667 398.4 667 398.4 668 398.4 668 398.4 669 398.4 669 398.4 670 398.4 670 398.4 671 398.4 671 398.4 672 398.4 672 393.9 673 393.9 673 392.0 674 392.0 674 390.7 675 390.7 675 390.8 676 390.8 676 387.1 677 387.1 677 389.6 678 389.6 678 387.5 679 387.5 679 387.7 680 387.7 680 389.5 681 389.5 681 387.3 682 387.3 682 387.4 683 387.4 683 391.6 684 391.6 684 391.7 685 391.7 685 389.8 686 389.8 686 387.4 687 387.4 687 387.6 688 387.6 688 388.0 689 388.0 689 388.2 690 388.2 690 387.8 691 387.8 691 378.7 692 378.7 692 387.8 693 387.8 693 392.4 694 392.4 694 390.0 695 390.0 695 390.2 696 390.2 696 394.0 697 394.0 697 389.9 698 389.9 698 390.1 699 390.1 699 393.0 700 393.0 700 393.9 701 393.9 701 395.3 702 395.3 702 395.8 703 395.8 703 398.4 704 398.4 704 398.4 705 398.4 705 398.4 706 398.4 706 398.4 707 398.4 707 394.7 708 394.7 708 392.0 709 392.0 709 391.6 710 391.6 710 393.3 711 393.3 711 390.2 712 390.2 712 390.0 713 390.0 713 387.1 714 387.1 714 387.3 715 387.3 715 392.3 716 392.3 716 393.9 717 393.9 717 391.0 718 391.0 718 393.6 719 393.6 719 389.4 720 389.4 720 392.0 721 392.0 721 391.7 722 391.7 722 394.0 723 394.0 723 394.4 724 394.4 724 394.4 725 394.4 725 397.5 726 397.5 726 398.4 727 398.4 727 398.4 728 398.4 728 398.4 729 398.4 729 398.4 730 398.4 730 398.4 731 398.4 731 398.4 732 398.4 732 392.5 733 392.5 733 388.4 734 388.4 734 386.4 735 386.4 735 389.2 736 389.2 736 389.3 737 389.3 737 389.4 738 389.4 738 387.0 739 387.0 739 384.7 740 384.7 740 390.7 741 390.7 741 386.5 742 386.5 742 386.7 743 386.7 743 386.9 744 386.9 744 385.6 745 385.6 745 387.1 746 387.1 746 387.3 747 387.3 747 387.5 748 387.5 748 393.8 749 393.8 749 393.9 750 393.9 750 392.0 751 392.0 751 392.1 752 392.1 752 388.1 753 388.1 753 389.9 754 389.9 754 394.4 755 394.4 755 388.7 756 388.7 756 392.3 757 392.3 757 391.8 758 391.8 758 395.1 759 395.1 759 396.2 760 396.2 760 392.8 761 392.8 761 398.4 762 398.4 762 398.4 763 398.4 763 398.4 764 398.4 764 391.5 765 391.5 765 386.7 766 386.7 766 384.5 767 384.5 767 385.9 768 385.9 768 387.0 769 387.0 769 383.8 770 383.8 770 385.5 771 385.5 771 385.8 772 385.8 772 383.7 773 383.7 773 389.6 774 389.6 774 382.0 775 382.0 775 386.9 776 386.9 776 387.2 777 387.2 777 386.7 778 386.7 778 386.9 779 386.9 779 385.8 780 385.8 780 386.1 781 386.1 781 394.7 782 394.7 782 386.5 783 386.5 783 390.6 784 390.6 784 390.8 785 390.8 785 392.8 786 392.8 786 392.0 787 392.0 787 394.6 788 394.6 788 398.4 789 398.4 789 398.4 790 398.4 790 398.4 791 398.4 791 398.4 792 398.4 792 398.4 793 398.4 793 395.4 794 395.4 794 393.1 795 393.1 795 390.1 796 390.1 796 390.3 797 390.3 797 389.1 798 389.1 798 389.4 799 389.4 799 392.7 800 392.7 800 391.5 801 391.5 801 391.7 802 391.7 802 390.2 803 390.2 803 386.9 804 386.9 804 391.4 805 391.4 805 391.6 806 391.6 806 394.2 807 394.2 807 394.4 808 394.4 808 393.2 809 393.2 809 393.3 810 393.3 810 393.1 811 393.1 811 395.9 812 395.9 812 397.1 813 397.1 813 396.8 814 396.8 814 395.5 815 395.5 815 395.0 816 395.0 816 397.0 817 397.0 817 396.9 818 396.9 818 397.0 819 397.0 819 396.3 820 396.3 820 396.4 821 396.4 821 396.5 822 396.5 822 397.2 823 397.2 823 397.9 824 397.9 824 398.4 825 398.4 825 395.3 826 395.3 826 389.4 827 389.4 827 387.6 828 387.6 828 391.8 829 391.8 829 389.3 830 389.3 830 389.5 831 389.5 831 389.7 832 389.7 832 386.7 833 386.7 833 387.0 834 387.0 834 388.0 835 388.0 835 390.7 836 390.7 836 388.6 837 388.6 837 380.0 838 380.0 838 388.5 839 388.5 839 386.2 840 386.2 840 386.6 841 386.6 841 386.9 842 386.9 842 387.9 843 387.9 843 388.8 844 388.8 844 391.8 845 391.8 845 394.5 846 394.5 846 398.4 847 398.4 847 398.4 848 398.4 848 398.4 849 398.4 849 398.4 850 398.4 850 398.4 851 398.4 851 398.4 852 398.4 852 394.6 853 394.6 853 391.0 854 391.0 854 393.2 855 393.2 855 393.3 856 393.3 856 393.3 857 393.3 857 391.0 858 391.0 858 381.2 859 381.2 859 386.2 860 386.2 860 386.4 861 386.4 861 391.6 862 391.6 862 391.7 863 391.7 863 388.6 864 388.6 864 388.8 865 388.8 865 391.1 866 391.1 866 383.7 867 383.7 867 384.0 868 384.0 868 384.2 869 384.2 869 389.6 870 389.6 870 390.3 871 390.3 871 389.0 872 389.0 872 394.7 873 394.7 873 394.8 874 394.8 874 394.9 875 394.9 875 391.3 876 391.3 876 391.4 877 391.4 877 391.6 878 391.6 878 393.2 879 393.2 879 392.4 880 392.4 880 392.8 881 392.8 881 395.0 882 395.0 882 397.8 883 397.8 883 398.4 884 398.4 884 399.6 883 399.6 883 400.1 882 400.1 882 403.6 881 403.6 881 406.3 880 406.3 880 406.8 879 406.8 879 406.2 878 406.2 878 408.6 877 408.6 877 408.8 876 408.8 876 409.0 875 409.0 875 404.2 874 404.2 874 404.3 873 404.3 873 404.4 872 404.4 872 410.4 871 410.4 871 407.1 870 407.1 870 411.2 869 411.2 869 417.8 868 417.8 868 418.1 867 418.1 867 418.4 866 418.4 866 408.8 865 408.8 865 411.9 864 411.9 864 412.1 863 412.1 863 406.7 862 406.7 862 406.8 861 406.8 861 411.9 860 411.9 860 412.1 859 412.1 859 418.8 858 418.8 858 407.2 857 407.2 857 404.4 856 404.4 856 404.5 855 404.5 855 404.6 854 404.6 854 406.7 853 406.7 853 404.5 852 404.5 852 399.6 851 399.6 851 399.6 850 399.6 850 399.6 849 399.6 849 399.6 848 399.6 848 399.6 847 399.6 847 399.6 846 399.6 846 404.3 845 404.3 845 407.5 844 407.5 844 408.6 843 408.6 843 409.3 842 409.3 842 413.4 841 413.4 841 413.8 840 413.8 840 414.2 839 414.2 839 410.7 838 410.7 838 414.0 837 414.0 837 407.2 836 407.2 836 406.5 835 406.5 835 411.6 834 411.6 834 410.3 833 410.3 833 410.6 832 410.6 832 406.6 831 406.6 831 406.8 830 406.8 830 406.9 829 406.9 829 407.0 828 407.0 828 412.4 827 412.4 827 407.4 826 407.4 826 403.3 825 403.3 825 399.6 824 399.6 824 400.0 823 400.0 823 400.7 822 400.7 822 401.4 821 401.4 821 402.0 820 402.0 820 402.2 819 402.2 819 400.7 818 400.7 818 400.8 817 400.8 817 401.1 816 401.1 816 402.5 815 402.5 815 402.0 814 402.0 814 400.9 813 400.9 813 401.0 812 401.0 812 402.2 811 402.2 811 403.8 810 403.8 810 405.4 809 405.4 809 405.6 808 405.6 808 403.4 807 403.4 807 403.6 806 403.6 806 405.3 805 405.3 805 405.5 804 405.5 804 409.1 803 409.1 803 407.2 802 407.2 802 407.3 801 407.3 801 407.5 800 407.5 800 404.9 799 404.9 799 408.1 798 408.1 798 408.3 797 408.3 797 407.8 796 407.8 796 407.9 795 407.9 795 406.1 794 406.1 794 403.3 793 403.3 793 399.6 792 399.6 792 399.6 791 399.6 791 399.6 790 399.6 790 399.6 789 399.6 789 399.6 788 399.6 788 401.8 787 401.8 787 403.5 786 403.5 786 404.6 785 404.6 785 404.9 784 404.9 784 405.1 783 405.1 783 410.4 782 410.4 782 403.1 781 403.1 781 411.0 780 411.0 780 411.3 779 411.3 779 408.5 778 408.5 778 408.7 777 408.7 777 409.5 776 409.5 776 409.7 775 409.7 775 411.0 774 411.0 774 405.6 773 405.6 773 412.0 772 412.0 772 407.7 771 407.7 771 407.9 770 407.9 770 409.5 769 409.5 769 409.8 768 409.8 768 411.0 767 411.0 767 410.3 766 410.3 766 408.6 765 408.6 765 404.9 764 404.9 764 399.6 763 399.6 763 399.6 762 399.6 762 399.6 761 399.6 761 404.9 760 404.9 760 401.5 759 401.5 759 402.5 758 402.5 758 405.1 757 405.1 757 406.5 756 406.5 756 408.4 755 408.4 755 404.5 754 404.5 754 408.1 753 408.1 753 410.7 752 410.7 752 406.4 751 406.4 751 406.6 750 406.6 750 403.2 749 403.2 749 403.3 748 403.3 748 411.6 747 411.6 747 411.9 746 411.9 746 412.1 745 412.1 745 410.2 744 410.2 744 411.0 743 411.0 743 411.1 742 411.1 742 411.3 741 411.3 741 406.0 740 406.0 740 415.0 739 415.0 739 411.2 738 411.2 738 407.4 737 407.4 737 407.5 736 407.5 736 407.6 735 407.6 735 412.6 734 412.6 734 410.5 733 410.5 733 406.0 732 406.0 732 399.6 731 399.6 731 399.6 730 399.6 730 399.6 729 399.6 729 399.6 728 399.6 728 399.6 727 399.6 727 399.6 726 399.6 726 400.3 725 400.3 725 404.2 724 404.2 724 402.8 723 402.8 723 403.2 722 403.2 722 405.2 721 405.2 721 405.5 720 405.5 720 408.1 719 408.1 719 405.1 718 405.1 718 406.3 717 406.3 717 404.8 716 404.8 716 406.2 715 406.2 715 408.6 714 408.6 714 408.8 713 408.8 713 409.2 712 409.2 712 408.3 711 408.3 711 405.7 710 405.7 710 406.3 709 406.3 709 405.0 708 405.0 708 402.7 707 402.7 707 399.6 706 399.6 706 399.6 705 399.6 705 399.6 704 399.6 704 399.6 703 399.6 703 402.6 702 402.6 702 402.7 701 402.7 701 404.2 700 404.2 700 404.9 699 404.9 699 407.1 698 407.1 698 407.2 697 407.2 697 404.5 696 404.5 696 410.1 695 410.1 695 410.3 694 410.3 694 407.3 693 407.3 693 408.6 692 408.6 692 416.4 691 416.4 691 408.6 690 408.6 690 410.9 689 410.9 689 411.0 688 411.0 688 411.4 687 411.4 687 411.6 686 411.6 686 408.4 685 408.4 685 407.5 684 407.5 684 407.7 683 407.7 683 410.2 682 410.2 682 410.4 681 410.4 681 411.1 680 411.1 680 410.2 679 410.2 679 410.3 678 410.3 678 408.3 677 408.3 677 412.8 676 412.8 676 408.7 675 408.7 675 408.8 674 408.8 674 407.3 673 407.3 673 405.2 672 405.2 672 399.6 671 399.6 671 399.6 670 399.6 670 399.6 669 399.6 669 399.6 668 399.6 668 399.6 667 399.6 667 399.6 666 399.6 666 399.6 665 399.6 665 403.0 664 403.0 664 405.5 663 405.5 663 405.6 662 405.6 662 407.5 661 407.5 661 406.1 660 406.1 660 405.0 659 405.0 659 405.6 658 405.6 658 411.3 657 411.3 657 411.7 656 411.7 656 411.9 655 411.9 655 412.3 654 412.3 654 408.0 653 408.0 653 408.8 652 408.8 652 409.1 651 409.1 651 414.5 650 414.5 650 419.0 649 419.0 649 415.6 648 415.6 648 413.1 647 413.1 647 407.7 646 407.7 646 399.6 645 399.6 645 399.6 644 399.6 644 399.6 643 399.6 643 399.6 642 399.6 642 399.6 641 399.6Z" fill="#fcacfc"/></svg>
<div class="a" style="left:93px;top:447px;width:171px;height:20px;background:rgba(62,62,62,0.6);border:1px solid #1c1c1c;border-left:0;border-radius:0 5px 5px 0"></div>
<div class="a" style="left:93px;top:451px;width:6px;overflow:hidden;font-size:12px;color:#f3d34a;line-height:16px;direction:rtl">1</div>
<svg class="a" style="left:104px;top:448px" width="20" height="20"><circle cx="10.2" cy="11" r="4.5" fill="none" stroke="#f3d34a" stroke-width="1.4"/></svg>
<div class="a" style="left:638px;top:447px;width:248px;height:20px;background:rgba(62,62,62,0.6);border:1px solid #1c1c1c;border-radius:5px"></div>
<div class="a" style="left:645px;top:450.5px;font-size:12px;color:#f3d34a;line-height:16px;letter-spacing:0.4px">Male Vocal_1_2</div>
<svg class="a" style="left:739px;top:448px" width="20" height="20"><circle cx="10" cy="11.5" r="4.5" fill="none" stroke="#f3d34a" stroke-width="1.4"/></svg>
<div class="a" style="left:303px;top:112px;width:2px;height:346px;background:#c2ab62;box-shadow:1px 0 0 rgba(0,0,0,0.38),-1px 0 0 rgba(0,0,0,0.38)"></div>
<svg class="a" style="left:296px;top:111px" width="16" height="16"><path d="M1.5 3 Q1.5 0.8 3.7 0.8 H12.3 Q14.5 0.8 14.5 3 V7.5 L8 13.5 L1.5 7.5Z" fill="#e6d27c"/><rect x="7" y="3" width="2" height="10" fill="#f4e48e"/></svg>
</body></html>
